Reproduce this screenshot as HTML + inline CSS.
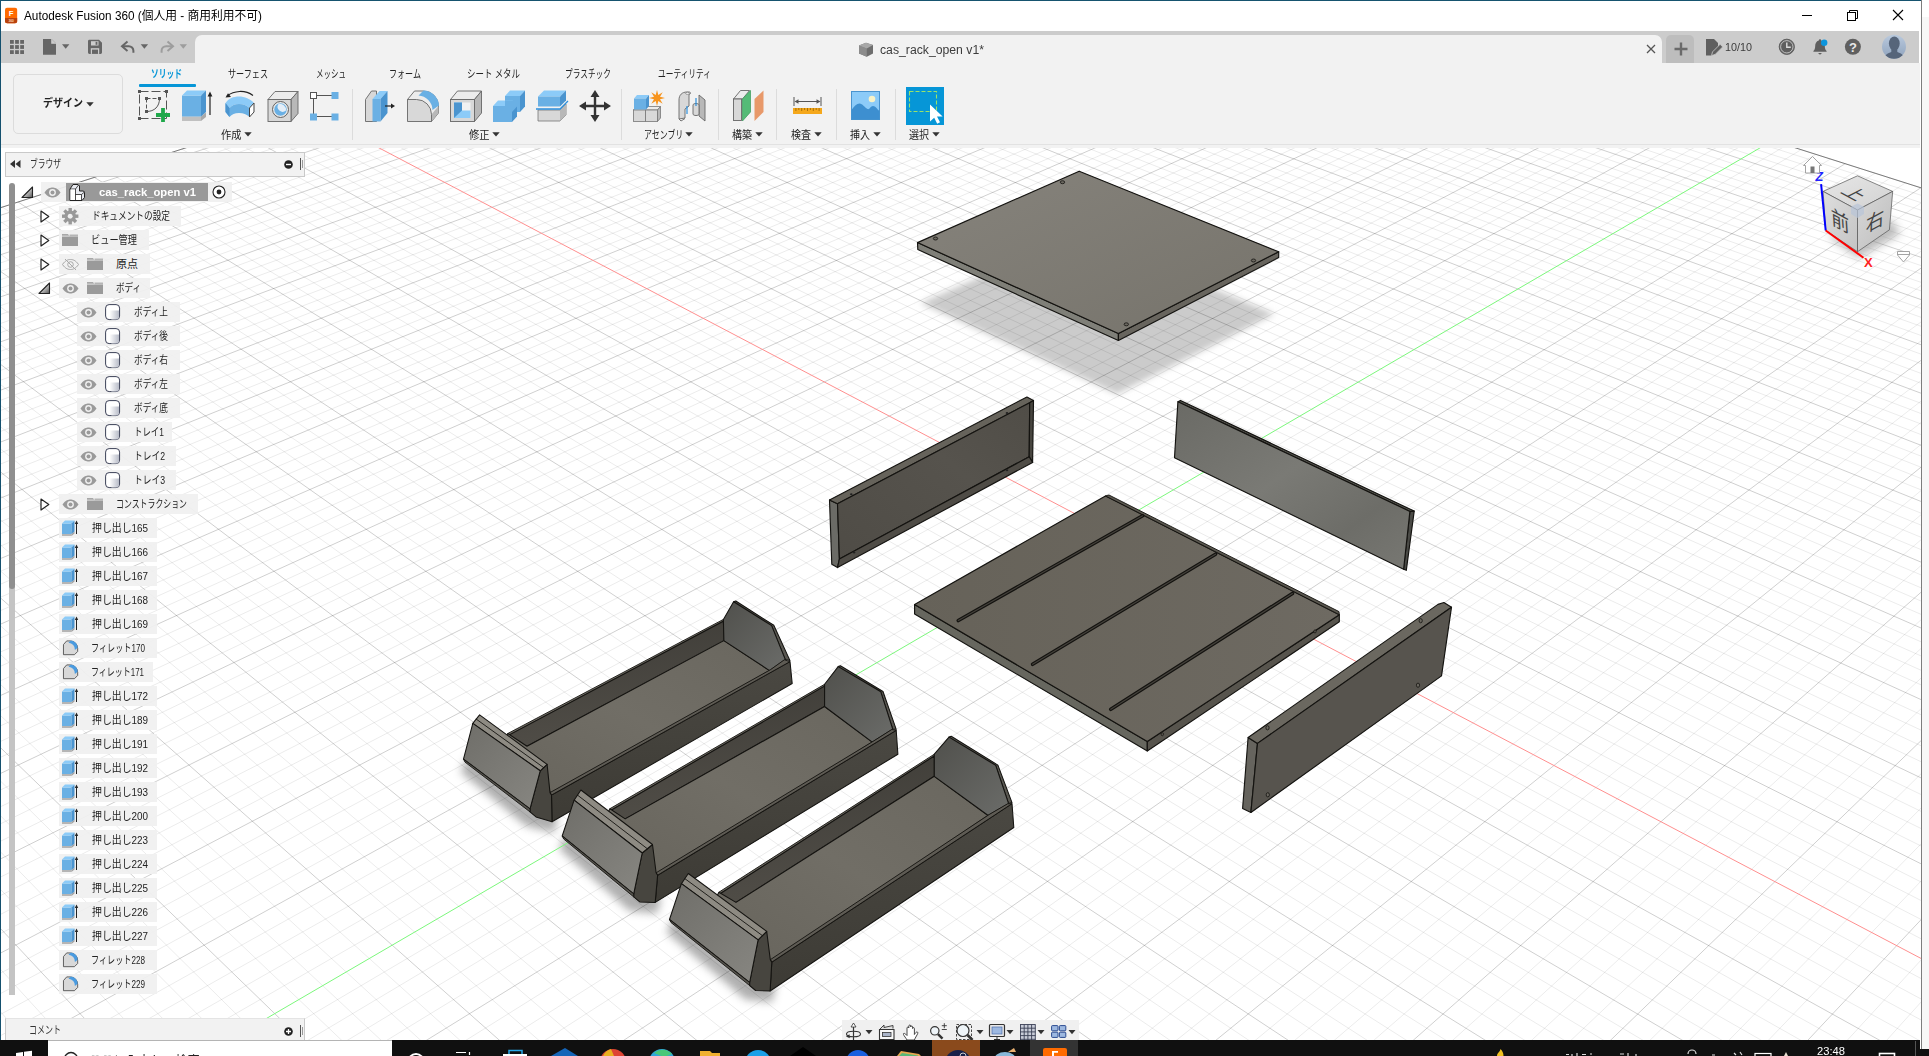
<!DOCTYPE html><html lang="ja"><head><meta charset="utf-8"><title>Autodesk Fusion 360</title><style>
*{box-sizing:border-box}
html,body{margin:0;padding:0}
body{width:1929px;height:1056px;overflow:hidden;background:#f7f7f7;position:relative;font-family:"Liberation Sans","Noto Sans CJK JP",sans-serif;}
.t{position:absolute;white-space:pre;transform-origin:0 50%;display:block}
.abs{position:absolute}
svg{position:absolute;overflow:visible}
</style></head><body><div class="abs" style="left:0;top:0;width:1922px;height:1049px;background:#fff"></div><div class="abs" style="left:0;top:0;width:1922px;height:1px;background:#16536f"></div><svg style="left:4.0px;top:6.5px" width="14.2" height="17" viewBox="0 0 16 21"><rect x="0.5" y="1" width="15" height="19" rx="2.5" fill="#ff6b00"/><path d="M0.5 13.5h15v4a2.5 2.5 0 0 1-2.5 2.5h-10a2.5 2.5 0 0 1-2.5-2.5z" fill="#b8420e"/><text x="8" y="11.2" font-family="Liberation Sans,sans-serif" font-size="9.5" font-weight="bold" fill="#fff" text-anchor="middle">F</text><text x="8" y="18.2" font-family="Liberation Sans,sans-serif" font-size="4" font-weight="bold" fill="#ffd9b8" text-anchor="middle">360</text></svg><span class="t" style="left:24.0px;top:7.5px;font-size:12px;line-height:16px;color:#000;font-weight:normal;transform:scaleX(0.9805);">Autodesk Fusion 360 (個人用 - 商用利用不可)</span><svg style="left:0.0px;top:0.0px" width="1929" height="31" viewBox="0 0 1929 31"><path d="M1802 15.5h10" stroke="#000" stroke-width="1"/><path d="M1849.5 12.5v-2h8v8h-2" fill="none" stroke="#000" stroke-width="1"/><rect x="1847.5" y="12.5" width="8" height="8" fill="none" stroke="#000" stroke-width="1"/><path d="M1893 10l10 10M1903 10l-10 10" stroke="#000" stroke-width="1.1"/></svg><div class="abs" style="left:1px;top:31px;width:1918px;height:32px;background:#cccccc"></div><div class="abs" style="left:195px;top:35px;width:1467px;height:29px;background:#f2f2f2;border-radius:7px 7px 0 0"></div><svg style="left:0.0px;top:31.0px" width="200" height="32" viewBox="0 31 200 32"><rect x="10.0" y="40.0" width="3.8" height="3.8" fill="#666"/><rect x="10.0" y="45.1" width="3.8" height="3.8" fill="#666"/><rect x="10.0" y="50.2" width="3.8" height="3.8" fill="#666"/><rect x="15.1" y="40.0" width="3.8" height="3.8" fill="#666"/><rect x="15.1" y="45.1" width="3.8" height="3.8" fill="#666"/><rect x="15.1" y="50.2" width="3.8" height="3.8" fill="#666"/><rect x="20.2" y="40.0" width="3.8" height="3.8" fill="#666"/><rect x="20.2" y="45.1" width="3.8" height="3.8" fill="#666"/><rect x="20.2" y="50.2" width="3.8" height="3.8" fill="#666"/><path d="M43 39h8.5l4.5 4.5v11.3h-13z" fill="#666"/><path d="M51.5 39v4.5h4.5" fill="#ccc" stroke="#ccc" stroke-width="0.6"/><path d="M62 44.3h7.4l-3.7 4.4z" fill="#666"/><path d="M88 41.2a1.4 1.4 0 0 1 1.4-1.4h9.6l3 3v9.7a1.4 1.4 0 0 1-1.4 1.4h-11.2a1.4 1.4 0 0 1-1.4-1.4z" fill="#666"/><rect x="91" y="41.2" width="7.5" height="4.3" fill="#ccc"/><rect x="95.6" y="41.8" width="1.8" height="3" fill="#666"/><rect x="90.8" y="48.2" width="8.4" height="5.7" fill="#ccc"/><rect x="92" y="49.6" width="6" height="4.3" fill="#666"/><path d="M127.5 41.5l-5.5 4.7 5.5 4.7" fill="none" stroke="#666" stroke-width="2" stroke-linejoin="miter"/><path d="M122.6 46.2h6.2a4.6 4.6 0 0 1 4.6 4.6v2" fill="none" stroke="#666" stroke-width="2"/><path d="M140.7 44.3h7.4l-3.7 4.4z" fill="#666"/><path d="M167.5 41.5l5.5 4.7-5.5 4.7" fill="none" stroke="#9d9d9d" stroke-width="2"/><path d="M172.4 46.2h-6.2a4.6 4.6 0 0 0-4.6 4.6v2" fill="none" stroke="#9d9d9d" stroke-width="2"/><path d="M179.6 44.3h7.4l-3.7 4.4z" fill="#9d9d9d"/></svg><svg style="left:858.0px;top:42.0px" width="16" height="16" viewBox="0 0 16 16"><path d="M1 3.5l7-2.8 7 2.2v8.6l-6.2 3.3-7.8-3.3z" fill="#6e6e6e"/><path d="M1 3.5l7.8 3v8.3l-7.8-3.3z" fill="#8c8c8c"/><path d="M1 3.5l7-2.8 7 2.2-6.2 3.6z" fill="#a8a8a8"/></svg><span class="t" style="left:880.0px;top:41.8px;font-size:12px;line-height:16px;color:#3c3c3c;font-weight:normal;transform:scaleX(1.0188);">cas_rack_open v1*</span><svg style="left:1646.0px;top:44.0px" width="10" height="10" viewBox="0 0 10 10"><path d="M1 1l8 8M9 1l-8 8" stroke="#555" stroke-width="1.3"/></svg><div class="abs" style="left:1666px;top:35px;width:28px;height:28px;background:#bdbdbd;border-radius:5px 5px 0 0"></div><svg style="left:1673.5px;top:41.5px" width="14" height="14" viewBox="0 0 14 14"><path d="M7 0.5v13M0.5 7h13" stroke="#6a6a6a" stroke-width="2.4"/></svg><svg style="left:1700.0px;top:31.0px" width="229" height="32" viewBox="1700 31 229 32"><path d="M1706 39h8l4 4v4l-6 6.5v2h-6z" fill="#5f5f5f"/><path d="M1711.5 55.5l1-3.6 7.6-7.6 2.6 2.6-7.6 7.6z" fill="#5f5f5f" stroke="#ccc" stroke-width="0.8"/><circle cx="1786.8" cy="46.8" r="7.6" fill="#5f5f5f"/><circle cx="1786.8" cy="46.8" r="7.6" fill="none" stroke="#5f5f5f" stroke-width="1" /><circle cx="1786.8" cy="46.8" r="6.2" fill="none" stroke="#ccc" stroke-width="0.9"/><path d="M1786.8 42.5v4.8h4" fill="none" stroke="#ddd" stroke-width="1.4"/><path d="M1820 39.2a1.2 1.2 0 0 1 1.2 1.2c2.6.8 3.6 3 3.6 5.6 0 2.8.8 4 1.8 5v.8h-13.2v-.8c1-1 1.8-2.2 1.8-5 0-2.600 1-4.800 3.600-5.600a1.200 1.200 0 0 1 1.200-1.200z" fill="#5f5f5f"/><path d="M1818 53h4l-2 1.700z" fill="#5f5f5f"/><circle cx="1824.2" cy="42.8" r="3.2" fill="#0c95dd"/><circle cx="1852.9" cy="46.800" r="8" fill="#5f5f5f"/><text x="1852.9" y="51.6" font-family="Liberation Sans,sans-serif" font-size="13" font-weight="bold" fill="#e8e8e8" text-anchor="middle">?</text><defs><linearGradient id="av" x1="0" y1="0" x2="0" y2="1"><stop offset="0" stop-color="#b9c9dd"/><stop offset="1" stop-color="#8fa3bd"/></linearGradient><clipPath id="avc"><circle cx="1894" cy="46.800" r="12"/></clipPath></defs><circle cx="1894" cy="46.800" r="12" fill="url(#av)"/><g clip-path="url(#avc)"><ellipse cx="1894.300" cy="43.500" rx="5.400" ry="7" fill="#56657a"/><path d="M1884 60c0-5 4-7 7.300-8v-4h6v4c3.300 1 7.300 3 7.300 8z" fill="#56657a"/></g></svg><span class="t" style="left:1725.0px;top:39.5px;font-size:11px;line-height:15px;color:#3c3c3c;font-weight:normal;transform:scaleX(0.9807);">10/10</span><div class="abs" style="left:1px;top:63px;width:1919px;height:85px;background:#f2f2f2"></div><div class="abs" style="left:1px;top:144px;width:1919px;height:1px;background:#e2e2e2"></div><div class="abs" style="left:13px;top:74px;width:110px;height:60px;border:1px solid #dcdcdc;border-radius:5px;background:#f2f2f2"></div><span class="t" style="left:43.0px;top:95.5px;font-size:11px;line-height:15px;color:#222;font-weight:bold;transform:scaleX(0.9091);">デザイン</span><svg style="left:85.5px;top:101.5px" width="8" height="5" viewBox="0 0 8 5"><path d="M0.3 0.3h7.4L4 4.6z" fill="#333"/></svg><span class="t" style="left:151.0px;top:66.8px;font-size:11px;line-height:15px;color:#0696d7;font-weight:bold;transform:scaleX(0.7045);">ソリッド</span><div class="abs" style="left:139px;top:84px;width:57px;height:3px;background:#0696d7;border-radius:1px"></div><span class="t" style="left:228.0px;top:66.8px;font-size:11px;line-height:15px;color:#222;font-weight:normal;transform:scaleX(0.7361);">サーフェス</span><span class="t" style="left:316.0px;top:66.8px;font-size:11px;line-height:15px;color:#222;font-weight:normal;transform:scaleX(0.6818);">メッシュ</span><span class="t" style="left:389.0px;top:66.8px;font-size:11px;line-height:15px;color:#222;font-weight:normal;transform:scaleX(0.7327);">フォーム</span><span class="t" style="left:467.0px;top:66.8px;font-size:11px;line-height:15px;color:#222;font-weight:normal;transform:scaleX(0.7674);">シート メタル</span><span class="t" style="left:565.0px;top:66.8px;font-size:11px;line-height:15px;color:#222;font-weight:normal;transform:scaleX(0.6993);">プラスチック</span><span class="t" style="left:658.0px;top:66.8px;font-size:11px;line-height:15px;color:#222;font-weight:normal;transform:scaleX(0.7002);">ユーティリティ</span><span class="t" style="left:221.0px;top:127.5px;font-size:11px;line-height:15px;color:#222;font-weight:normal;transform:scaleX(0.9318);">作成</span><svg style="left:244.0px;top:132.0px" width="8" height="5" viewBox="0 0 8 5"><path d="M0.3 0.3h7.4L4 4.6z" fill="#333"/></svg><span class="t" style="left:469.0px;top:127.5px;font-size:11px;line-height:15px;color:#222;font-weight:normal;transform:scaleX(0.9318);">修正</span><svg style="left:492.0px;top:132.0px" width="8" height="5" viewBox="0 0 8 5"><path d="M0.3 0.3h7.4L4 4.6z" fill="#333"/></svg><span class="t" style="left:644.0px;top:127.5px;font-size:11px;line-height:15px;color:#222;font-weight:normal;transform:scaleX(0.7217);">アセンブリ</span><svg style="left:684.5px;top:132.0px" width="8" height="5" viewBox="0 0 8 5"><path d="M0.3 0.3h7.4L4 4.6z" fill="#333"/></svg><span class="t" style="left:732.0px;top:127.5px;font-size:11px;line-height:15px;color:#222;font-weight:normal;transform:scaleX(0.9091);">構築</span><svg style="left:755.0px;top:132.0px" width="8" height="5" viewBox="0 0 8 5"><path d="M0.3 0.3h7.4L4 4.6z" fill="#333"/></svg><span class="t" style="left:790.5px;top:127.5px;font-size:11px;line-height:15px;color:#222;font-weight:normal;transform:scaleX(0.9091);">検査</span><svg style="left:813.5px;top:132.0px" width="8" height="5" viewBox="0 0 8 5"><path d="M0.3 0.3h7.4L4 4.6z" fill="#333"/></svg><span class="t" style="left:850.0px;top:127.5px;font-size:11px;line-height:15px;color:#222;font-weight:normal;transform:scaleX(0.9091);">挿入</span><svg style="left:872.5px;top:132.0px" width="8" height="5" viewBox="0 0 8 5"><path d="M0.3 0.3h7.4L4 4.6z" fill="#333"/></svg><span class="t" style="left:909.0px;top:127.5px;font-size:11px;line-height:15px;color:#222;font-weight:normal;transform:scaleX(0.9091);">選択</span><svg style="left:931.5px;top:132.0px" width="8" height="5" viewBox="0 0 8 5"><path d="M0.3 0.3h7.4L4 4.6z" fill="#333"/></svg><div class="abs" style="left:351.5px;top:89px;width:1px;height:51px;background:#dcdcdc"></div><div class="abs" style="left:620.5px;top:89px;width:1px;height:51px;background:#dcdcdc"></div><div class="abs" style="left:717.5px;top:89px;width:1px;height:51px;background:#dcdcdc"></div><div class="abs" style="left:776.0px;top:89px;width:1px;height:51px;background:#dcdcdc"></div><div class="abs" style="left:835.5px;top:89px;width:1px;height:51px;background:#dcdcdc"></div><div class="abs" style="left:894.5px;top:89px;width:1px;height:51px;background:#dcdcdc"></div><svg style="left:138.0px;top:90.0px" width="32" height="32" viewBox="0 0 32 32"><rect x="1.500" y="1.500" width="27" height="27" fill="none" stroke="#555" stroke-width="1" stroke-dasharray="9 3"/><rect x="0" y="0" width="3" height="3" fill="#555"/><rect x="27" y="0" width="3" height="3" fill="#555"/><rect x="0" y="27" width="3" height="3" fill="#555"/><path d="M8.500 8.500h13M8.500 8.500v13" fill="none" stroke="#555" stroke-width="1" stroke-dasharray="4 2"/><path d="M21.500 8.500c0 8-5 13-13 13" fill="none" stroke="#555" stroke-width="1"/><rect x="7" y="7" width="3" height="3" fill="#555"/><rect x="20" y="7" width="3" height="3" fill="#555"/><rect x="7" y="20" width="3" height="3" fill="#555"/><path d="M25 18v14M18 25h14" stroke="#1fa84a" stroke-width="3.800"/></svg><svg style="left:182.0px;top:90.0px" width="32" height="32" viewBox="0 0 32 32"><path d="M0 26.500l5-4h19l-5 4z" fill="#cfcfcf"/><path d="M0 26.500h19v4.500h-19z" fill="#c0c0c0"/><path d="M19 26.500l5-4v4.500l-5 4z" fill="#a9a9a9"/><path d="M0 5.500h19v21h-19z" fill="#6ab0e4"/><path d="M0 5.500l5-5h19l-5 5z" fill="#8ccbf8"/><path d="M19 5.500l5-5v21.500l-5 4.500z" fill="#4a94cf"/><path d="M28 25v-20" stroke="#222" stroke-width="1.200"/><path d="M25.600 6.500l2.400-5 2.400 5z" fill="#222"/></svg><svg style="left:224.0px;top:90.0px" width="32" height="32" viewBox="0 0 32 32"><path d="M1.500 13c3-4.500 8-6.500 13.500-6.500s11.500 2.500 15 6.500l-4.500 5c-3-2.500-6-4-10.500-4s-7 1.500-9.500 4z" fill="#8ccbf8"/><path d="M1.500 13l4 5c2.500-2.500 5-4 9.500-4s7.500 1.500 10.500 4v9c-3-2.500-6-4-10.500-4s-7 1.500-9.500 4l-4-5z" fill="#6ab0e4"/><path d="M1.500 13l4 5v9l-4-5z" fill="#4a94cf"/><path d="M25.500 18l4.500-5v9l-4.500 5z" fill="#fff" stroke="#444" stroke-width="1"/><path d="M29 5.500c-8-6-19-5-26 0.500" fill="none" stroke="#222" stroke-width="1.100"/><path d="M1.500 7.500l5.500-0.500-3-3.800z" fill="#222"/></svg><svg style="left:267.0px;top:90.0px" width="32" height="32" viewBox="0 0 32 32"><path d="M1 9.500l7-8h23l-7 8z" fill="#ececec" stroke="#666" stroke-width="0.900"/><path d="M24 9.500l7-8v22l-7 8z" fill="#b8b8b8" stroke="#666" stroke-width="0.900"/><rect x="1" y="9.500" width="23" height="22" fill="#d8d8d8" stroke="#666" stroke-width="0.900"/><circle cx="13.500" cy="19.500" r="8" fill="#e8e8e8" stroke="#555" stroke-width="0.900"/><circle cx="13.500" cy="19.500" r="6.200" fill="#6ab0e4"/><path d="M11.500 14a5 5 0 0 0 7.500 6.500a6.200 6.200 0 0 0-7.500-6.500z" fill="#e4eef8"/></svg><svg style="left:309.5px;top:91.5px" width="29" height="29" viewBox="0 0 29 29"><path d="M3.500 3.500h21M3.500 3.500v21M3.500 24.500h21" fill="none" stroke="#555" stroke-width="1"/><rect x="0.500" y="0.500" width="6" height="6" fill="#fff" stroke="#555" stroke-width="1"/><rect x="21.5" y="0" width="7" height="7" fill="#6ab0e4"/><rect x="0" y="21.5" width="7" height="7" fill="#6ab0e4"/><rect x="21.5" y="21.5" width="7" height="7" fill="#6ab0e4"/></svg><svg style="left:364.5px;top:90.0px" width="32" height="32" viewBox="0 0 32 32"><path d="M0.500 9.500l6-8.500h5v30.500h-11z" fill="#d8d8d8" stroke="#666" stroke-width="0.900"/><path d="M7.500 9l7-8h8l-7 8z" fill="#8ccbf8"/><path d="M7.500 9h8v22.500h-8z" fill="#6ab0e4"/><path d="M15.500 9l7-8v22l-7 8.500z" fill="#4a94cf"/><path d="M20 16h7" stroke="#222" stroke-width="1.200"/><path d="M26 13.500l4 2.500-4 2.500z" fill="#222"/><rect x="19" y="13" width="2" height="6" fill="#fff" opacity="0.0"/></svg><svg style="left:406.5px;top:90.0px" width="33" height="32" viewBox="0 0 33 32"><path d="M0.500 9.500l7-8.500h9a15 15 0 0 1 15 15v7l-7 8.500z" fill="#ececec" stroke="#666" stroke-width="0.900"/><path d="M24.500 24.500l7-8.500v7l-7 8.500z" fill="#b8b8b8"/><path d="M0.500 9.500h9a15 15 0 0 1 15 15v7h-24z" fill="#d8d8d8" stroke="#666" stroke-width="0.900"/><path d="M11.500 5.500l5-5a16 16 0 0 1 15.500 15l-6.500 4.500a15 15 0 0 0-14-14.500z" fill="#6ab0e4"/></svg><svg style="left:449.5px;top:90.0px" width="32" height="32" viewBox="0 0 32 32"><path d="M0.500 9.500l7-8.500h24l-7 8.500z" fill="#ececec" stroke="#666" stroke-width="0.900"/><path d="M24.500 9.500l7-8.500v22l-7 8.500z" fill="#b8b8b8" stroke="#666" stroke-width="0.900"/><rect x="0.500" y="9.500" width="24" height="22" fill="#d8d8d8" stroke="#666" stroke-width="0.900"/><rect x="4" y="12.500" width="16.500" height="15.500" fill="#f2f2f2"/><path d="M4 12.500h8v8h8.500v7.500h-16.500z" fill="#8ccbf8"/><path d="M4 12.500h8v8l-8 7.500z" fill="#4a94cf"/></svg><svg style="left:493.0px;top:90.0px" width="32" height="32" viewBox="0 0 32 32"><path d="M12 6l5-5.500h15l-5 5.500z" fill="#8ccbf8"/><path d="M27 6l5-5.500v16l-5 5.500z" fill="#4a94cf"/><rect x="12" y="6" width="15" height="16" fill="#6ab0e4"/><path d="M0 16l5-5.500h15l-5 5.500z" fill="#8ccbf8"/><rect x="0" y="16" width="19" height="16" fill="#6ab0e4"/><path d="M19 22l5-5.500v10l-5 5.500z" fill="#4a94cf"/><path d="M12 10.500h8v5.500h-8z" fill="#6ab0e4"/></svg><svg style="left:536.0px;top:90.0px" width="32" height="32" viewBox="0 0 32 32"><path d="M2 20h22l6-6v11l-6 6h-22z" fill="#d8d8d8" stroke="#777" stroke-width="0.800"/><path d="M24 20l6-6v11l-6 6z" fill="#b8b8b8"/><path d="M2 6.500l6-6h22l-6 6z" fill="#8ccbf8"/><rect x="2" y="6.500" width="22" height="10" fill="#6ab0e4"/><path d="M24 6.500l6-6v10l-6 6z" fill="#4a94cf"/><path d="M0 19h24l8-8" fill="none" stroke="#2b8fdd" stroke-width="1.300"/></svg><svg style="left:579.0px;top:90.0px" width="32" height="32" viewBox="0 0 32 32"><path d="M16 3v26M3 16h26" stroke="#333" stroke-width="2.400"/><path d="M16 0l4.500 7h-9zM16 32l4.500-7h-9zM0 16l7-4.500v9zM32 16l-7-4.500v9z" fill="#333"/></svg><svg style="left:632.5px;top:90.0px" width="33" height="32" viewBox="0 0 33 32"><path d="M0.500 20l3-3.500h24l-3 3.500z" fill="#ececec" stroke="#777" stroke-width="0.800"/><rect x="0.500" y="20" width="12" height="11.500" fill="#d8d8d8" stroke="#777" stroke-width="0.800"/><rect x="12.500" y="20" width="12" height="11.500" fill="#d8d8d8" stroke="#777" stroke-width="0.800"/><path d="M24.500 20l3-3.500v11.500l-3 3.500z" fill="#b8b8b8" stroke="#777" stroke-width="0.800"/><path d="M1 8.500l3-3.500h12l-3 3.500z" fill="#8ccbf8"/><rect x="1" y="8.500" width="12" height="11" fill="#6ab0e4"/><path d="M13 8.500l3-3.500v11l-3 3.500z" fill="#4a94cf"/><polygon points="24.0,0.0 25.3,5.0 29.7,2.3 27.0,6.7 32.0,8.0 27.0,9.3 29.7,13.7 25.3,11.0 24.0,16.0 22.7,11.0 18.3,13.7 21.0,9.3 16.0,8.0 21.0,6.7 18.3,2.3 22.7,5.0" fill="#f7941d"/></svg><svg style="left:677.0px;top:90.0px" width="30" height="32" viewBox="0 0 30 32"><path d="M2 29v-19c0-5 3-8 8-8h2c2 0 2 2 0 2.500v11.500l-4 3v9z" fill="#d8d8d8" stroke="#666" stroke-width="0.900"/><path d="M2 29l2 2 4-2.500" fill="none" stroke="#666" stroke-width="0.900"/><ellipse cx="10.500" cy="3.300" rx="2" ry="1" fill="#fff" stroke="#666" stroke-width="0.600"/><path d="M22 5l6 5v21l-6-5z" fill="#b8b8b8" stroke="#666" stroke-width="0.900"/><path d="M16 15c0-2 6-2 6 0v9c0 2-6 2-6 0z" fill="#d8d8d8" stroke="#666" stroke-width="0.900"/><path d="M10 16v8M19 8v8" stroke="#2b8fdd" stroke-width="1.200"/></svg><svg style="left:732.5px;top:90.0px" width="32" height="32" viewBox="0 0 32 32"><path d="M0.500 9l7-8.500h9l-7 8.500z" fill="#ececec" stroke="#666" stroke-width="0.900"/><rect x="0.500" y="9" width="8" height="21.500" fill="#d8d8d8" stroke="#666" stroke-width="0.900"/><path d="M9.500 9l8-8.500v21.500l-8 9z" fill="#55bb77" stroke="#3a9a5a" stroke-width="0.700"/><path d="M21.500 9l9-8.500v21.500l-9 9z" fill="#e8996a"/></svg><svg style="left:792.5px;top:97.0px" width="29" height="18" viewBox="0 0 29 18"><rect x="0" y="11" width="29" height="6" fill="#f5a81c"/><path d="M2.9 11v3.0" stroke="#8a5a00" stroke-width="0.700"/><path d="M5.8 11v2.0" stroke="#8a5a00" stroke-width="0.700"/><path d="M8.7 11v3.0" stroke="#8a5a00" stroke-width="0.700"/><path d="M11.6 11v2.0" stroke="#8a5a00" stroke-width="0.700"/><path d="M14.5 11v3.0" stroke="#8a5a00" stroke-width="0.700"/><path d="M17.4 11v2.0" stroke="#8a5a00" stroke-width="0.700"/><path d="M20.3 11v3.0" stroke="#8a5a00" stroke-width="0.700"/><path d="M23.2 11v2.0" stroke="#8a5a00" stroke-width="0.700"/><path d="M26.1 11v3.0" stroke="#8a5a00" stroke-width="0.700"/><path d="M1 0v9M28 0v9" stroke="#555" stroke-width="1"/><path d="M3 4.500h23" stroke="#555" stroke-width="1"/><path d="M1.500 4.500l4-2.200v4.400zM27.500 4.500l-4-2.200v4.400z" fill="#555"/></svg><svg style="left:851.0px;top:91.0px" width="29" height="29" viewBox="0 0 29 29"><rect x="0.500" y="0.500" width="28" height="28" fill="#8ccbf8" stroke="#4a94cf" stroke-width="1"/><path d="M0.500 19c3-4 5-6.500 8-6.500s5 4 8 5.500c2 1 3-3 5.500-3s4 3 6.500 5v8.500h-28z" fill="#3d8fd0"/><circle cx="21" cy="8" r="3.300" fill="#f8f2c8"/></svg><svg style="left:906.0px;top:87.0px" width="38" height="38" viewBox="0 0 38 38"><rect x="0" y="0" width="38" height="38" fill="#0696d7"/><rect x="3.500" y="4.500" width="27" height="20" fill="none" stroke="#9be26a" stroke-width="1.100" stroke-dasharray="4 2"/><path d="M24 17.500v17l4.200-3.800 3 6 2.800-1.400-3-5.800h5.600z" fill="#fff"/></svg><svg width="1929" height="1056" viewBox="0 0 1929 1056" style="left:0;top:0"><defs><clipPath id="vp"><rect x="1" y="148" width="1920" height="892"/></clipPath></defs><g clip-path="url(#vp)"><rect x="1" y="148" width="1920" height="892" fill="#fff"/><defs>
<filter id="blur8" x="-30%" y="-30%" width="160%" height="160%"><feGaussianBlur stdDeviation="3.2"/></filter>
<filter id="blur5" x="-30%" y="-30%" width="160%" height="160%"><feGaussianBlur stdDeviation="4"/></filter>
<linearGradient id="gTop" x1="0" y1="0" x2="1" y2="1"><stop offset="0" stop-color="#86837c"/><stop offset="1" stop-color="#76736b"/></linearGradient>
<linearGradient id="gBase" x1="0" y1="0" x2="1" y2="0"><stop offset="0" stop-color="#666259"/><stop offset="1" stop-color="#6e6a62"/></linearGradient>
<linearGradient id="gBack" x1="0" y1="0" x2="1" y2="1"><stop offset="0" stop-color="#6a6a65"/><stop offset="0.45" stop-color="#7a7a75"/><stop offset="0.75" stop-color="#6d6d68"/><stop offset="1" stop-color="#787873"/></linearGradient>
<linearGradient id="gFront" x1="0" y1="0" x2="1" y2="1"><stop offset="0" stop-color="#6f6e69"/><stop offset="1" stop-color="#878681"/></linearGradient>
<linearGradient id="gTrayBack" x1="0" y1="0" x2="1" y2="1"><stop offset="0" stop-color="#50504c"/><stop offset="1" stop-color="#6b6c69"/></linearGradient>
<linearGradient id="gFloor" x1="0" y1="1" x2="1" y2="0"><stop offset="0" stop-color="#67645c"/><stop offset="0.5" stop-color="#716e66"/><stop offset="1" stop-color="#6a675f"/></linearGradient>
<linearGradient id="gWall" x1="0" y1="0" x2="0" y2="1"><stop offset="0" stop-color="#4a4842"/><stop offset="1" stop-color="#3d3b35"/></linearGradient>
<linearGradient id="gWallIn" x1="0" y1="0" x2="0.25" y2="1"><stop offset="0" stop-color="#3e3c37"/><stop offset="1" stop-color="#504d47"/></linearGradient>
<linearGradient id="gLeft" x1="0" y1="1" x2="1" y2="0"><stop offset="0" stop-color="#4f4c46"/><stop offset="0.6" stop-color="#56534d"/><stop offset="1" stop-color="#504d47"/></linearGradient>
</defs>
<polygon points="1080.0,233.0 920.5,303.0 1117.0,394.0 1274.5,314.0" fill="#cbcbcb" filter="url(#blur8)"/>
<polygon points="467.5,757.1 530.0,806.9 558.0,815.8 554.0,832.8 526.0,825.9 460.5,772.1" fill="#8c8c8c" opacity="0.7" filter="url(#blur5)"/>
<polygon points="566.2,834.0 633.7,891.9 661.2,896.4 657.2,913.4 629.7,910.9 559.2,849.0" fill="#8c8c8c" opacity="0.7" filter="url(#blur5)"/>
<polygon points="673.5,917.5 749.6,980.5 776.1,985.0 772.1,1002.0 745.6,999.5 666.5,932.5" fill="#8c8c8c" opacity="0.7" filter="url(#blur5)"/>
<path d="M-846.6 481.4L984.7 -110.3M-836.6 496.9L1002.1 -104.7M-831.6 504.8L1010.9 -101.9M-826.4 512.7L1019.7 -99.1M-821.3 520.8L1028.6 -96.3M-810.7 537.1L1046.5 -90.6M-805.4 545.4L1055.6 -87.7M-800.0 553.8L1064.7 -84.8M-794.5 562.3L1073.9 -81.9M-783.4 579.6L1092.5 -75.9M-777.8 588.3L1101.8 -73.0M-772.1 597.2L1111.2 -70.0M-766.3 606.2L1120.7 -66.9M-754.6 624.4L1139.9 -60.8M-748.6 633.7L1149.5 -57.8M-742.6 643.1L1159.3 -54.7M-736.5 652.6L1169.1 -51.6M-724.0 671.9L1188.9 -45.2M-717.7 681.7L1198.9 -42.1M-711.3 691.7L1208.9 -38.9M-704.8 701.7L1219.1 -35.6M-691.6 722.2L1239.5 -29.1M-684.9 732.7L1249.9 -25.8M-678.1 743.2L1260.3 -22.5M-671.2 753.9L1270.8 -19.2M-657.2 775.7L1292.0 -12.4M-650.1 786.8L1302.7 -9.0M-642.8 798.1L1313.4 -5.6M-635.5 809.4L1324.3 -2.1M-620.6 832.6L1346.2 4.8M-613.0 844.5L1357.3 8.4M-605.3 856.4L1368.4 11.9M-597.5 868.6L1379.7 15.5M-581.5 893.3L1402.4 22.7M-573.4 906.0L1413.9 26.4M-565.2 918.8L1425.4 30.1M-556.8 931.7L1437.1 33.8M-539.8 958.2L1460.6 41.3M-531.1 971.7L1472.5 45.1M-522.3 985.4L1484.5 48.9M-513.3 999.3L1496.6 52.7M-495.1 1027.7L1521.0 60.5M-485.8 1042.2L1533.4 64.5M-476.3 1056.9L1545.8 68.4M-466.7 1071.8L1558.4 72.4M-447.1 1102.3L1583.7 80.5M-437.1 1117.9L1596.5 84.6M-426.9 1133.7L1609.5 88.7M-416.5 1149.7L1622.5 92.8M-395.4 1182.6L1648.8 101.2M-384.6 1199.4L1662.1 105.4M-373.6 1216.4L1675.6 109.7M-362.5 1233.8L1689.1 114.0M-339.6 1269.3L1716.5 122.7M-327.9 1287.4L1730.3 127.2M-316.0 1305.9L1744.3 131.6M-304.0 1324.7L1758.3 136.1M-279.2 1363.2L1786.8 145.1M-266.5 1382.9L1801.2 149.7M-253.6 1402.9L1815.8 154.4M-240.5 1423.3L1830.4 159.0M-213.6 1465.2L1860.1 168.5M-199.8 1486.6L1875.1 173.2M-185.7 1508.5L1890.2 178.1M-171.4 1530.7L1905.5 182.9M-142.0 1576.4L1936.4 192.8M-126.9 1599.8L1952.0 197.7M-111.5 1623.7L1967.8 202.8M-95.9 1648.1L1983.7 207.8M-63.7 1698.1L2015.9 218.1M-47.1 1723.9L2032.2 223.3M-30.2 1750.1L2048.7 228.5M-13.0 1776.9L2065.3 233.8M22.5 1832.0L2098.9 244.5M40.7 1860.3L2115.9 249.9M59.4 1889.3L2133.1 255.4M78.4 1918.8L2150.5 260.9M117.6 1979.8L2185.6 272.1M137.8 2011.2L2203.4 277.8M158.5 2043.4L2221.4 283.5M179.6 2076.2L2239.5 289.3M223.2 2143.9L2276.2 301.0M245.8 2179.0L2294.9 306.9M268.8 2214.8L2313.7 312.9M292.4 2251.4L2332.6 318.9M341.2 2327.2L2371.1 331.2M366.4 2366.5L2390.6 337.4M392.3 2406.7L2410.3 343.7M418.8 2447.9L2430.2 350.0M473.8 2533.3L2470.5 362.8M502.3 2577.6L2490.9 369.3M531.5 2623.0L2511.6 375.9M561.5 2669.6L2532.4 382.6M623.9 2766.6L2574.7 396.0M656.3 2817.0L2596.2 402.9M689.6 2868.7L2617.9 409.8M723.9 2921.9L2639.8 416.7M795.2 3032.9L2684.2 430.9M832.5 3090.7L2706.7 438.1M870.8 3150.2L2729.5 445.3M910.2 3211.5L2752.5 452.6M992.7 3339.7L2799.3 467.5M1035.8 3406.8L2823.0 475.1M1080.4 3475.9L2847.0 482.7M1126.3 3547.3L2871.2 490.4M-823.0 473.8L1214.3 3547.3M-799.7 466.3L1253.7 3476.0M-776.6 458.8L1291.8 3406.8M-753.7 451.4L1328.8 3339.7M-708.7 436.8L1399.5 3211.6M-686.5 429.7L1433.3 3150.3M-664.5 422.6L1466.1 3090.8M-642.8 415.6L1498.0 3033.0M-599.9 401.7L1559.1 2922.1M-578.8 394.9L1588.5 2868.9M-557.9 388.1L1617.0 2817.1M-537.2 381.5L1644.8 2766.7M-496.4 368.3L1698.2 2669.8M-476.3 361.8L1723.9 2623.2M-456.4 355.3L1749.0 2577.8M-436.6 349.0L1773.4 2533.5M-397.7 336.4L1820.5 2448.1M-378.5 330.2L1843.2 2407.0M-359.5 324.0L1865.3 2366.8M-340.7 318.0L1887.0 2327.6M-303.6 306.0L1928.8 2251.8M-285.3 300.0L1948.9 2215.1M-267.1 294.2L1968.7 2179.3M-249.1 288.4L1988.0 2144.3M-213.6 276.9L2025.4 2076.6M-196.1 271.2L2043.4 2043.8M-178.8 265.6L2061.1 2011.7M-161.6 260.1L2078.5 1980.2M-127.6 249.1L2112.1 1919.3M-110.9 243.7L2128.3 1889.8M-94.2 238.3L2144.3 1860.8M-77.8 233.0L2160.0 1832.5M-45.3 222.5L2190.3 1777.4M-29.2 217.3L2205.1 1750.7M-13.3 212.2L2219.5 1724.4M2.5 207.1L2233.7 1698.7M33.6 197.0L2261.3 1648.7M49.0 192.0L2274.7 1624.3M64.2 187.1L2287.9 1600.5M79.4 182.2L2300.8 1577.0M109.2 172.6L2326.0 1531.4M124.0 167.8L2338.2 1509.1M138.6 163.1L2350.3 1487.3M153.2 158.4L2362.1 1465.9M181.8 149.1L2385.2 1424.0M196.0 144.5L2396.4 1403.7M210.1 140.0L2407.5 1383.6M224.0 135.5L2418.3 1363.9M251.6 126.6L2439.5 1325.5M265.2 122.2L2449.9 1306.7M278.7 117.8L2460.1 1288.2M292.1 113.5L2470.1 1270.1M318.6 104.9L2489.6 1234.6M331.7 100.7L2499.2 1217.3M344.7 96.5L2508.6 1200.2M357.6 92.3L2517.8 1183.4M383.1 84.1L2536.0 1150.6M395.7 80.0L2544.8 1134.6M408.2 76.0L2553.5 1118.8M420.6 72.0L2562.1 1103.2M445.2 64.0L2578.9 1072.7M457.3 60.1L2587.1 1057.8M469.4 56.2L2595.2 1043.1M481.4 52.3L2603.2 1028.6M505.0 44.7L2618.8 1000.3M516.7 40.9L2626.5 986.4M528.3 37.2L2634.1 972.7M539.9 33.4L2641.5 959.2M562.7 26.1L2656.1 932.7M574.0 22.4L2663.2 919.8M585.2 18.8L2670.3 907.0M596.3 15.2L2677.2 894.4M618.3 8.1L2690.9 869.6M629.2 4.6L2697.6 857.5M640.0 1.1L2704.2 845.5M650.8 -2.4L2710.7 833.7M672.0 -9.3L2723.5 810.5M682.6 -12.7L2729.7 799.2M693.0 -16.0L2735.9 787.9M703.4 -19.4L2742.1 776.8M723.9 -26.0L2754.1 755.1M734.1 -29.3L2760.0 744.4M744.2 -32.6L2765.8 733.8M754.2 -35.8L2771.5 723.4M774.1 -42.2L2782.8 702.9M783.9 -45.4L2788.4 692.8M793.7 -48.6L2793.8 682.9M803.4 -51.7L2799.3 673.1M822.6 -57.9L2809.9 653.8M832.1 -61.0L2815.1 644.3M841.5 -64.0L2820.3 634.9M850.9 -67.1L2825.4 625.6M869.5 -73.1L2835.5 607.4M878.7 -76.0L2840.4 598.4M887.8 -79.0L2845.3 589.6M896.9 -81.9L2850.1 580.8M914.9 -87.7L2859.7 563.6M923.8 -90.6L2864.3 555.1M932.7 -93.5L2869.0 546.7M941.5 -96.3L2873.5 538.4M958.9 -102.0L2882.5 522.1M967.6 -104.7L2887.0 514.0M976.1 -107.5L2891.3 506.1M984.7 -110.3L2895.7 498.2" stroke="#000" stroke-opacity="0.08" stroke-width="1" fill="none"/>
<path d="M-841.6 489.1L993.3 -107.5M-816.0 528.9L1037.5 -93.4M-789.0 570.9L1083.2 -78.9M-760.5 615.2L1130.3 -63.9M-730.3 662.2L1178.9 -48.4M-698.3 711.9L1229.3 -32.4M-664.3 764.8L1281.3 -15.8M-628.1 821.0L1335.2 1.3M-589.5 880.9L1391.0 19.1M-548.4 944.9L1448.8 37.5M-504.3 1013.4L1508.8 56.6M-457.0 1086.9L1571.0 76.4M-406.1 1166.0L1635.6 97.0M-351.1 1251.4L1702.7 118.4M-227.1 1444.1L1845.2 163.7M-156.8 1553.3L1920.8 187.8M-79.9 1672.9L1999.7 212.9M4.6 1804.1L2082.0 239.1M97.8 1949.0L2167.9 266.5M201.2 2109.7L2257.8 295.1M316.5 2288.9L2351.8 325.0M445.9 2490.1L2450.2 356.4M592.3 2717.5L2553.5 389.3M759.0 2976.6L2661.9 423.8M950.8 3274.7L2775.8 460.0M1173.7 3621.0L2895.7 498.2M-846.6 481.4L1173.7 3621.0M-731.1 444.1L1364.7 3274.7M-621.2 408.6L1529.0 2976.7M-516.7 374.8L1671.8 2717.7M-417.1 342.6L1797.2 2490.3M-322.1 311.9L1908.1 2289.2M-231.3 282.6L2006.9 2110.1M-144.5 254.6L2095.4 1949.5M-61.5 227.7L2175.3 1804.7M18.1 202.0L2247.6 1673.5M94.4 177.4L2313.5 1554.0M167.6 153.7L2373.7 1444.8M237.8 131.0L2429.0 1344.5M370.4 88.2L2527.0 1166.9M433.0 68.0L2570.6 1087.8M493.2 48.5L2611.1 1014.3M551.3 29.7L2648.8 945.9M607.4 11.6L2684.1 881.9M661.5 -5.8L2717.1 822.1M713.7 -22.7L2748.1 765.9M764.2 -39.0L2777.2 713.1M813.0 -54.8L2804.6 663.4M860.2 -70.1L2830.5 616.5M906.0 -84.8L2854.9 572.1M950.2 -99.1L2878.1 530.2" stroke="#000" stroke-opacity="0.19" stroke-width="1" fill="none"/>
<path d="M-846.6 481.4L984.7 -110.3L2895.7 498.2" stroke="#7a7a7a" stroke-width="1" fill="none"/>
<path d="M305.4 109.2L2479.9 1252.2" stroke="#ff8f8f" stroke-width="1" fill="none"/>
<path d="M-291.7 1343.8L1772.5 140.6" stroke="#7cf77c" stroke-width="1" fill="none"/>
<polygon points="917.5,242.6 1118.4,333.4 1118.4,340.4 917.8,249.6" fill="#7f7f78" stroke="#141310" stroke-width="1.15" stroke-linejoin="round" />
<polygon points="1118.4,333.4 1278.7,251.8 1278.7,257.6 1118.4,340.4" fill="#68655e" stroke="#141310" stroke-width="1.15" stroke-linejoin="round" />
<polygon points="1079.2,171.2 1278.7,251.8 1118.4,333.4 917.5,242.6" fill="url(#gTop)" stroke="#141310" stroke-width="1.15" stroke-linejoin="round" />
<ellipse cx="1062.5" cy="182.2" rx="2.2" ry="1.5" fill="#6a675f" stroke="#141310" stroke-width="0.8"/>
<ellipse cx="935.5" cy="238.5" rx="2.2" ry="1.5" fill="#6a675f" stroke="#141310" stroke-width="0.8"/>
<ellipse cx="1253.5" cy="260.5" rx="2.2" ry="1.5" fill="#6a675f" stroke="#141310" stroke-width="0.8"/>
<ellipse cx="1126.3" cy="324.3" rx="2.2" ry="1.5" fill="#6a675f" stroke="#141310" stroke-width="0.8"/>
<polygon points="1409.9,511.4 1414.2,511.1 1406.3,570.3 1403.6,569.2" fill="#4a4a46" stroke="#141310" stroke-width="1.15" stroke-linejoin="round" />
<polygon points="1177.9,401.8 1180.5,400.4 1414.2,511.1 1409.9,511.4" fill="#55554f" stroke="#141310" stroke-width="1.15" stroke-linejoin="round" />
<polygon points="1177.9,401.8 1409.9,511.4 1403.6,569.2 1174.5,457.7" fill="url(#gBack)" stroke="#141310" stroke-width="1.15" stroke-linejoin="round" />
<polygon points="829.5,499.9 837.5,503.7 839.4,559.0 837.5,567.6 831.8,564.3" fill="#6b6b66" stroke="#141310" stroke-width="1.15" stroke-linejoin="round" />
<polygon points="829.5,499.9 1026.9,397.0 1033.5,400.4 1029.7,402.7 837.5,503.7" fill="#66635b" stroke="#141310" stroke-width="1.15" stroke-linejoin="round" />
<polygon points="837.5,503.7 1029.7,402.7 1029.2,456.7 839.4,559.0" fill="url(#gLeft)" stroke="#141310" stroke-width="1.15" stroke-linejoin="round" />
<polygon points="1029.7,402.7 1033.5,400.4 1032.6,462.4 1029.2,456.7" fill="#47453f" stroke="#141310" stroke-width="1.15" stroke-linejoin="round" />
<polygon points="839.4,559.0 1029.2,456.7 1032.6,462.4 837.5,567.6" fill="#4f4c46" stroke="#141310" stroke-width="1.15" stroke-linejoin="round" />
<ellipse cx="851.3" cy="494.2" rx="1.3" ry="1.0" fill="#222"/>
<ellipse cx="1007.0" cy="413.1" rx="1.3" ry="1.0" fill="#222"/>
<ellipse cx="854.1" cy="552.6" rx="1.3" ry="1.0" fill="#222"/>
<ellipse cx="1007.0" cy="470.2" rx="1.3" ry="1.0" fill="#222"/>
<polygon points="914.6,604.6 1147.3,741.6 1147.3,751.0 914.6,613.9" fill="#67675f" stroke="#141310" stroke-width="1.15" stroke-linejoin="round" />
<polygon points="1147.3,741.6 1339.3,614.7 1339.3,621.8 1147.3,751.0" fill="#57544d" stroke="#141310" stroke-width="1.15" stroke-linejoin="round" />
<polygon points="1105.5,495.9 1339.3,614.7 1147.3,741.6 914.6,604.6" fill="url(#gBase)" stroke="#141310" stroke-width="1.15" stroke-linejoin="round" />
<polygon points="1105.5,495.9 1109.0,495.0 1339.0,611.6 1339.3,614.7" fill="#5a574f" stroke="#141310" stroke-width="0.9" stroke-linejoin="round" />
<ellipse cx="1315.0" cy="631.4" rx="1.2" ry="1.6" fill="#57544d" stroke="#141310" stroke-width="0.7"/>
<ellipse cx="1162.3" cy="734.2" rx="1.2" ry="1.6" fill="#57544d" stroke="#141310" stroke-width="0.7"/>
<path d="M958.3 620.5L1142.6 515.8" stroke="#141310" stroke-width="3.6" stroke-linecap="round"/>
<path d="M958.3 620.5L1142.6 515.8" stroke="#45423c" stroke-width="1.1" stroke-linecap="round"/>
<path d="M1032.6 664.3L1215.5 554.2" stroke="#141310" stroke-width="3.6" stroke-linecap="round"/>
<path d="M1032.6 664.3L1215.5 554.2" stroke="#45423c" stroke-width="1.1" stroke-linecap="round"/>
<path d="M1110.8 709.3L1292.4 593.5" stroke="#141310" stroke-width="3.6" stroke-linecap="round"/>
<path d="M1110.8 709.3L1292.4 593.5" stroke="#45423c" stroke-width="1.1" stroke-linecap="round"/>
<polygon points="1248.1,737.5 1257.5,743.4 1250.9,812.5 1242.6,808.5" fill="#66645e" stroke="#141310" stroke-width="1.15" stroke-linejoin="round" />
<polygon points="1248.1,737.5 1438.0,604.4 1443.9,602.5 1451.5,607.2 1257.5,743.4" fill="#6b6860" stroke="#141310" stroke-width="1.15" stroke-linejoin="round" />
<polygon points="1257.5,743.4 1451.5,607.2 1441.5,675.9 1250.9,812.5" fill="#57544e" stroke="#141310" stroke-width="1.15" stroke-linejoin="round" />
<ellipse cx="1267.5" cy="727.8" rx="1.6" ry="2.1" fill="#6a675f" stroke="#141310" stroke-width="0.8"/>
<ellipse cx="1420.7" cy="620.7" rx="1.6" ry="2.1" fill="#6a675f" stroke="#141310" stroke-width="0.8"/>
<ellipse cx="1418.0" cy="685.2" rx="1.6" ry="2.1" fill="#6a675f" stroke="#141310" stroke-width="0.8"/>
<ellipse cx="1267.8" cy="794.8" rx="1.6" ry="2.1" fill="#6a675f" stroke="#141310" stroke-width="0.8"/>
<polygon points="733.6,601.8 735.8,601.0 773.8,625.3 790.0,660.6 785.3,659.6 771.6,625.6" fill="#5a5852" stroke="#141310" stroke-width="1.05" stroke-linejoin="round" />
<polygon points="507.8,733.5 723.4,619.4 723.4,621.2 509.0,735.1" fill="#6a675f" stroke="#141310" stroke-width="0.9" stroke-linejoin="round" />
<polygon points="509.0,735.1 723.4,621.2 723.9,640.6 527.0,746.2 519.5,743.7" fill="url(#gWallIn)" stroke="#141310" stroke-width="1.05" stroke-linejoin="round" />
<polygon points="507.8,733.5 527.0,746.2 723.9,640.6 769.6,670.6 551.5,795.5 542.2,772.8 502.0,743.1" fill="url(#gFloor)" stroke="#141310" stroke-width="1.05" stroke-linejoin="round" />
<polygon points="733.6,601.8 771.6,625.6 785.3,659.6 769.6,670.6 723.9,640.6 723.4,619.4" fill="url(#gTrayBack)" stroke="#141310" stroke-width="1.05" stroke-linejoin="round" />
<polygon points="551.5,795.0 790.0,661.6 792.2,683.5 552.0,821.8" fill="url(#gWall)" stroke="#141310" stroke-width="1.05" stroke-linejoin="round" />
<polygon points="550.0,792.6 770.6,669.6 784.3,659.8 790.0,661.6 551.5,795.0" fill="#5e5b54" stroke="#141310" stroke-width="0.9" stroke-linejoin="round" />
<polygon points="547.1,764.4 550.0,792.6 551.5,795.0 552.0,821.8 536.0,816.9 530.0,811.9 530.0,808.9 540.2,770.8" fill="#47453f" stroke="#141310" stroke-width="1.05" stroke-linejoin="round" />
<polygon points="479.6,714.8 547.1,764.4 540.2,770.8 472.8,723.4" fill="#8e8b83" stroke="#141310" stroke-width="1.05" stroke-linejoin="round" />
<path d="M476.2 719.1L543.7 767.6" fill="none" stroke="#141310" stroke-width="0.9" stroke-linecap="round"/>
<polygon points="472.8,723.4 540.2,770.8 530.0,808.9 463.5,759.1" fill="url(#gFront)" stroke="#141310" stroke-width="1.05" stroke-linejoin="round" />
<polygon points="463.5,759.1 530.0,808.9 530.0,811.9 465.0,762.1" fill="#56544e" stroke="#141310" stroke-width="0.9" stroke-linejoin="round" />
<polygon points="838.2,666.6 840.4,665.8 883.0,691.5 896.2,729.3 892.8,729.3 880.8,691.8" fill="#5a5852" stroke="#141310" stroke-width="1.05" stroke-linejoin="round" />
<polygon points="609.9,808.7 824.6,684.3 824.6,686.1 611.1,810.3" fill="#6a675f" stroke="#141310" stroke-width="0.9" stroke-linejoin="round" />
<polygon points="611.1,810.3 824.6,686.1 824.6,706.5 625.2,818.9 619.7,817.6" fill="url(#gWallIn)" stroke="#141310" stroke-width="1.05" stroke-linejoin="round" />
<polygon points="609.9,808.7 625.2,818.9 824.6,706.5 872.3,742.2 657.6,875.7 644.2,855.0 604.1,819.9" fill="url(#gFloor)" stroke="#141310" stroke-width="1.05" stroke-linejoin="round" />
<polygon points="838.2,666.6 880.8,691.8 892.8,729.3 872.3,742.2 824.6,706.5 824.6,684.3" fill="url(#gTrayBack)" stroke="#141310" stroke-width="1.05" stroke-linejoin="round" />
<polygon points="657.6,875.2 896.2,730.3 897.9,754.2 655.2,902.4" fill="url(#gWall)" stroke="#141310" stroke-width="1.05" stroke-linejoin="round" />
<polygon points="656.1,872.8 873.3,741.2 891.8,729.5 896.2,730.3 657.6,875.2" fill="#5e5b54" stroke="#141310" stroke-width="0.9" stroke-linejoin="round" />
<polygon points="652.5,844.5 656.1,872.8 657.6,875.2 655.2,902.4 639.7,901.9 633.7,896.9 633.7,893.9 642.2,853.0" fill="#47453f" stroke="#141310" stroke-width="1.05" stroke-linejoin="round" />
<polygon points="580.9,790.0 652.5,844.5 642.2,853.0 574.1,800.2" fill="#8e8b83" stroke="#141310" stroke-width="1.05" stroke-linejoin="round" />
<path d="M577.5 795.1L647.4 848.8" fill="none" stroke="#141310" stroke-width="0.9" stroke-linecap="round"/>
<polygon points="574.1,800.2 642.2,853.0 633.7,893.9 562.2,836.0" fill="url(#gFront)" stroke="#141310" stroke-width="1.05" stroke-linejoin="round" />
<polygon points="562.2,836.0 633.7,893.9 633.7,896.9 563.7,839.0" fill="#56544e" stroke="#141310" stroke-width="0.9" stroke-linejoin="round" />
<polygon points="949.0,737.1 951.2,736.3 997.9,765.1 1012.0,802.6 1008.6,803.6 995.7,765.4" fill="#5a5852" stroke="#141310" stroke-width="1.05" stroke-linejoin="round" />
<polygon points="718.9,892.2 934.3,754.2 934.3,756.0 720.1,893.8" fill="#6a675f" stroke="#141310" stroke-width="0.9" stroke-linejoin="round" />
<polygon points="720.1,893.8 934.3,756.0 934.3,776.3 736.0,902.4 729.5,901.1" fill="url(#gWallIn)" stroke="#141310" stroke-width="1.05" stroke-linejoin="round" />
<polygon points="718.9,892.2 736.0,902.4 934.3,776.3 988.2,815.5 771.8,962.6 760.1,941.9 713.0,903.4" fill="url(#gFloor)" stroke="#141310" stroke-width="1.05" stroke-linejoin="round" />
<polygon points="949.0,737.1 995.7,765.4 1008.6,803.6 988.2,815.5 934.3,776.3 934.3,754.2" fill="url(#gTrayBack)" stroke="#141310" stroke-width="1.05" stroke-linejoin="round" />
<polygon points="771.8,962.1 1012.0,803.6 1013.8,827.5 770.1,991.0" fill="url(#gWall)" stroke="#141310" stroke-width="1.05" stroke-linejoin="round" />
<polygon points="770.3,959.7 989.2,814.5 1007.6,803.8 1012.0,803.6 771.8,962.1" fill="#5e5b54" stroke="#141310" stroke-width="0.9" stroke-linejoin="round" />
<polygon points="766.7,931.4 770.3,959.7 771.8,962.1 770.1,991.0 755.6,990.5 749.6,985.5 749.6,982.5 758.1,939.9" fill="#47453f" stroke="#141310" stroke-width="1.05" stroke-linejoin="round" />
<polygon points="688.3,873.5 766.7,931.4 758.1,939.9 681.4,883.7" fill="#8e8b83" stroke="#141310" stroke-width="1.05" stroke-linejoin="round" />
<path d="M684.8 878.6L762.4 935.6" fill="none" stroke="#141310" stroke-width="0.9" stroke-linecap="round"/>
<polygon points="681.4,883.7 758.1,939.9 749.6,982.5 669.5,919.5" fill="url(#gFront)" stroke="#141310" stroke-width="1.05" stroke-linejoin="round" />
<polygon points="669.5,919.5 749.6,982.5 749.6,985.5 671.0,922.5" fill="#56544e" stroke="#141310" stroke-width="0.9" stroke-linejoin="round" />
<defs><linearGradient id="vcT" x1="0" y1="0" x2="1" y2="1"><stop offset="0" stop-color="#e6e6e6"/><stop offset="1" stop-color="#d2d2d2"/></linearGradient><linearGradient id="vcF" x1="0" y1="0" x2="1" y2="1"><stop offset="0" stop-color="#dedede"/><stop offset="1" stop-color="#c4c4c4"/></linearGradient><linearGradient id="vcR" x1="0" y1="0" x2="1" y2="1"><stop offset="0" stop-color="#d8d8d8"/><stop offset="1" stop-color="#bdbdbd"/></linearGradient><filter id="vcb" x="-30%" y="-30%" width="160%" height="160%"><feGaussianBlur stdDeviation="4"/></filter></defs><polygon points="1828,236 1858,258 1900,234 1892,220" fill="#909090" opacity="0.6" filter="url(#vcb)"/><polygon points="1823.1,191.4 1857.5,175.8 1892.7,191.4 1857.5,210.0" fill="url(#vcT)" stroke="#555" stroke-width="0.700"/><polygon points="1823.1,191.4 1857.5,210.0 1857.5,251.7 1825.7,230.5" fill="url(#vcF)" stroke="#555" stroke-width="0.700"/><polygon points="1857.5,210.0 1892.7,191.4 1889.4,229.8 1857.5,251.7" fill="url(#vcR)" stroke="#555" stroke-width="0.700"/><polygon points="1857.5,203.5 1864,206.800 1864,214 1857.5,218 1851,214 1851,206.800" fill="#b8c4d8" opacity="0.700"/><text font-family="Noto Sans CJK JP,sans-serif" fill="#444" font-size="17" transform="matrix(1.0,0.54,-1.0,0.52,1848.2,196.9)" text-anchor="middle">上</text><text font-family="Noto Sans CJK JP,sans-serif" fill="#444" font-size="17" transform="matrix(1.08,0.58,0.08,1.24,1840.6,228.8)" text-anchor="middle">前</text><text font-family="Noto Sans CJK JP,sans-serif" fill="#444" font-size="17" transform="matrix(1.08,-0.57,-0.05,1.2,1874.7,228.4)" text-anchor="middle">右</text><path d="M1821.100 184.100L1825.700 230.500" stroke="#0000ff" stroke-width="2"/><path d="M1825.700 230.500L1863.500 257.700" stroke="#ff0000" stroke-width="2"/><text x="1815.500" y="181.500" font-family="Liberation Sans,sans-serif" font-size="13" font-weight="bold" fill="#2222ff" transform="skewX(-8)" style="transform-origin:1819px 176px">Z</text><text x="1864" y="266.500" font-family="Liberation Sans,sans-serif" font-size="13" font-weight="bold" fill="#ff2222">X</text><path d="M1803.500 165.500l9-9 9 9h-2v7.500h-14v-7.500z" fill="#fff" stroke="#9a9a9a" stroke-width="0.900"/><rect x="1810.500" y="166.500" width="4" height="6.500" fill="#777"/><path d="M1897.500 251.500h12v3.500l-6 7-6-7z" fill="#fff" stroke="#9a9a9a" stroke-width="0.900"/><path d="M1897.500 254.500h12" stroke="#9a9a9a" stroke-width="0.900"/></g></svg><div class="abs" style="left:5px;top:152px;width:300px;height:25px;background:#f2f2f2;border:1px solid #c9c9c9"></div><svg style="left:10.0px;top:159.5px" width="11" height="8" viewBox="0 0 11 8"><path d="M5 0v8l-5-4zM10.500 0v8l-5-4z" fill="#333"/></svg><span class="t" style="left:30.0px;top:157.3px;font-size:11px;line-height:15px;color:#333;font-weight:normal;transform:scaleX(0.7045);">ブラウザ</span><svg style="left:283.5px;top:159.5px" width="9" height="9" viewBox="0 0 9 9"><circle cx="4.500" cy="4.500" r="4.300" fill="#222"/><path d="M2 4.500h5" stroke="#fff" stroke-width="1.400"/></svg><svg style="left:299.5px;top:158.0px" width="4" height="12" viewBox="0 0 4 12"><path d="M0.500 0v12" stroke="#555" stroke-width="1"/><path d="M2.500 2v8" stroke="#999" stroke-width="1"/></svg><div class="abs" style="left:9px;top:190px;width:6px;height:805px;background:#c4c4c4"></div><div class="abs" style="left:9px;top:183px;width:6px;height:406px;background:#8f8f8f;border-radius:3px"></div><svg style="left:21.0px;top:186.0px" width="13" height="13" viewBox="0 0 13 13"><defs><linearGradient id="tg" x1="0" y1="0" x2="1" y2="1"><stop offset="0.300" stop-color="#eee"/><stop offset="1" stop-color="#555"/></linearGradient></defs><path d="M11.500 1v10.500h-10.500z" fill="url(#tg)" stroke="#222" stroke-width="1.100" stroke-linejoin="round"/></svg><div class="abs" style="left:41.0px;top:182.0px;width:191.0px;height:20px;background:rgba(240,240,240,0.92)"></div><svg style="left:43.5px;top:186.5px" width="17" height="11" viewBox="0 0 17 11"><path d="M0.500 5.500c3-4.500 6-5 8-5s5 0.500 8 5c-3 4.500-6 5-8 5s-5-0.500-8-5z" fill="#9a9a9a"/><circle cx="8.500" cy="5.500" r="3.400" fill="#f0f0f0"/><circle cx="8.500" cy="5.500" r="2" fill="#9a9a9a"/></svg><div class="abs" style="left:66px;top:183px;width:142px;height:18px;background:#999"></div><svg style="left:68.5px;top:182.5px" width="17" height="19" viewBox="0 0 17 19"><path d="M1 6l3-4.500h5l1.500 1.500v5l4 0 1 1.500v5l-2.500 3h-12z" fill="#e8eaf0" stroke="#222" stroke-width="1"/><path d="M1 6h5.500v11.500M6.500 6l3-4M6.500 11.500h6l3-2.500M12.500 11.500v6" fill="none" stroke="#222" stroke-width="0.800"/><path d="M1.500 6.500h4.500v10.500h-4.500z" fill="#fff"/><path d="M7 12h5v5h-5z" fill="#fff"/></svg><span class="t" style="left:99.0px;top:184.8px;font-size:11.5px;line-height:15px;color:#fff;font-weight:bold;transform:scaleX(0.9787);">cas_rack_open v1</span><svg style="left:212.0px;top:185.0px" width="14" height="14" viewBox="0 0 14 14"><circle cx="7" cy="7" r="6" fill="#fff" stroke="#222" stroke-width="1.100"/><circle cx="7" cy="7" r="2.400" fill="#222"/></svg><svg style="left:40.2px;top:209.5px" width="10.5" height="13" viewBox="0 0 10.5 13"><path d="M1 1l7.800 5.500-7.800 5.500z" fill="#fff" stroke="#222" stroke-width="1.200" stroke-linejoin="round"/></svg><div class="abs" style="left:59.0px;top:206.0px;width:122.0px;height:20px;background:rgba(240,240,240,0.92)"></div><svg style="left:61.8px;top:207.8px" width="16.4" height="16.4" viewBox="0 0 16.4 16.4"><rect x="6.500" y="0" width="3.400" height="4" fill="#999" transform="rotate(0 8.200 8.200)"/><rect x="6.500" y="0" width="3.400" height="4" fill="#999" transform="rotate(45 8.200 8.200)"/><rect x="6.500" y="0" width="3.400" height="4" fill="#999" transform="rotate(90 8.200 8.200)"/><rect x="6.500" y="0" width="3.400" height="4" fill="#999" transform="rotate(135 8.200 8.200)"/><rect x="6.500" y="0" width="3.400" height="4" fill="#999" transform="rotate(180 8.200 8.200)"/><rect x="6.500" y="0" width="3.400" height="4" fill="#999" transform="rotate(225 8.200 8.200)"/><rect x="6.500" y="0" width="3.400" height="4" fill="#999" transform="rotate(270 8.200 8.200)"/><rect x="6.500" y="0" width="3.400" height="4" fill="#999" transform="rotate(315 8.200 8.200)"/><circle cx="8.200" cy="8.200" r="5.800" fill="#999"/><circle cx="8.200" cy="8.200" r="2.500" fill="#f0f0f0"/></svg><span class="t" style="left:92.0px;top:208.5px;font-size:11px;line-height:15px;color:#222;font-weight:normal;transform:scaleX(0.7879);">ドキュメントの設定</span><svg style="left:40.2px;top:233.5px" width="10.5" height="13" viewBox="0 0 10.5 13"><path d="M1 1l7.800 5.500-7.800 5.500z" fill="#fff" stroke="#222" stroke-width="1.200" stroke-linejoin="round"/></svg><div class="abs" style="left:59.0px;top:230.0px;width:90.0px;height:20px;background:rgba(240,240,240,0.92)"></div><svg style="left:62.0px;top:233.0px" width="16" height="13" viewBox="0 0 16 13"><path d="M0 1h6l1.200 1.800h-7.200z" fill="#a8a8a8"/><path d="M0 3.500h16v9.500h-16z" fill="#9a9a9a"/><path d="M7.500 1.500h8.500v2h-8.500z" fill="#b5b5b5"/></svg><span class="t" style="left:91.0px;top:232.5px;font-size:11px;line-height:15px;color:#222;font-weight:normal;transform:scaleX(0.8364);">ビュー管理</span><svg style="left:40.2px;top:257.5px" width="10.5" height="13" viewBox="0 0 10.5 13"><path d="M1 1l7.800 5.500-7.800 5.500z" fill="#fff" stroke="#222" stroke-width="1.200" stroke-linejoin="round"/></svg><div class="abs" style="left:59.0px;top:254.0px;width:91.0px;height:20px;background:rgba(240,240,240,0.92)"></div><svg style="left:61.5px;top:258.5px" width="17" height="11" viewBox="0 0 17 11"><path d="M0.500 5.500c3-4.500 6-5 8-5s5 0.500 8 5c-3 4.500-6 5-8 5s-5-0.500-8-5z" fill="none" stroke="#a8a8a8" stroke-width="1"/><circle cx="8.500" cy="5.500" r="2.800" fill="none" stroke="#a8a8a8" stroke-width="1"/><path d="M3 0l11 11" stroke="#a8a8a8" stroke-width="1"/></svg><svg style="left:87.0px;top:257.0px" width="16" height="13" viewBox="0 0 16 13"><path d="M0 1h6l1.200 1.800h-7.200z" fill="#a8a8a8"/><path d="M0 3.500h16v9.500h-16z" fill="#9a9a9a"/><path d="M7.500 1.500h8.500v2h-8.500z" fill="#b5b5b5"/></svg><span class="t" style="left:116.0px;top:256.5px;font-size:11px;line-height:15px;color:#222;font-weight:normal;transform:scaleX(1.0000);">原点</span><svg style="left:38.0px;top:282.0px" width="13" height="13" viewBox="0 0 13 13"><defs><linearGradient id="tg" x1="0" y1="0" x2="1" y2="1"><stop offset="0.300" stop-color="#eee"/><stop offset="1" stop-color="#555"/></linearGradient></defs><path d="M11.500 1v10.500h-10.500z" fill="url(#tg)" stroke="#222" stroke-width="1.100" stroke-linejoin="round"/></svg><div class="abs" style="left:59.0px;top:278.0px;width:91.0px;height:20px;background:rgba(240,240,240,0.92)"></div><svg style="left:61.5px;top:282.5px" width="17" height="11" viewBox="0 0 17 11"><path d="M0.500 5.500c3-4.500 6-5 8-5s5 0.500 8 5c-3 4.500-6 5-8 5s-5-0.500-8-5z" fill="#9a9a9a"/><circle cx="8.500" cy="5.500" r="3.400" fill="#f0f0f0"/><circle cx="8.500" cy="5.500" r="2" fill="#9a9a9a"/></svg><svg style="left:87.0px;top:281.0px" width="16" height="13" viewBox="0 0 16 13"><path d="M0 1h6l1.200 1.800h-7.200z" fill="#a8a8a8"/><path d="M0 3.500h16v9.500h-16z" fill="#9a9a9a"/><path d="M7.500 1.500h8.500v2h-8.500z" fill="#b5b5b5"/></svg><span class="t" style="left:116.0px;top:280.5px;font-size:11px;line-height:15px;color:#222;font-weight:normal;transform:scaleX(0.7756);">ボディ</span><div class="abs" style="left:77.0px;top:302.0px;width:103.0px;height:20px;background:rgba(240,240,240,0.92)"></div><svg style="left:79.5px;top:306.5px" width="17" height="11" viewBox="0 0 17 11"><path d="M0.500 5.500c3-4.500 6-5 8-5s5 0.500 8 5c-3 4.500-6 5-8 5s-5-0.500-8-5z" fill="#9a9a9a"/><circle cx="8.500" cy="5.500" r="3.400" fill="#f0f0f0"/><circle cx="8.500" cy="5.500" r="2" fill="#9a9a9a"/></svg><svg style="left:105.4px;top:303.9px" width="15.2" height="16.2" viewBox="0 0 15.2 16.2"><defs><linearGradient id="bg" x1="0" y1="0" x2="1" y2="0"><stop offset="0" stop-color="#fff"/><stop offset="1" stop-color="#b8bcc8"/></linearGradient></defs><rect x="0.600" y="0.600" width="14" height="15" rx="3.500" fill="#fff" stroke="#3a3f55" stroke-width="1"/><path d="M4.500 6.500h9.500v6a3 3 0 0 1-3 3h-3.500a3 3 0 0 1-3-3z" fill="url(#bg)"/></svg><span class="t" style="left:134.0px;top:304.5px;font-size:11px;line-height:15px;color:#222;font-weight:normal;transform:scaleX(0.7864);">ボディ上</span><div class="abs" style="left:77.0px;top:326.0px;width:103.0px;height:20px;background:rgba(240,240,240,0.92)"></div><svg style="left:79.5px;top:330.5px" width="17" height="11" viewBox="0 0 17 11"><path d="M0.500 5.500c3-4.500 6-5 8-5s5 0.500 8 5c-3 4.500-6 5-8 5s-5-0.500-8-5z" fill="#9a9a9a"/><circle cx="8.500" cy="5.500" r="3.400" fill="#f0f0f0"/><circle cx="8.500" cy="5.500" r="2" fill="#9a9a9a"/></svg><svg style="left:105.4px;top:327.9px" width="15.2" height="16.2" viewBox="0 0 15.2 16.2"><defs><linearGradient id="bg" x1="0" y1="0" x2="1" y2="0"><stop offset="0" stop-color="#fff"/><stop offset="1" stop-color="#b8bcc8"/></linearGradient></defs><rect x="0.600" y="0.600" width="14" height="15" rx="3.500" fill="#fff" stroke="#3a3f55" stroke-width="1"/><path d="M4.500 6.500h9.500v6a3 3 0 0 1-3 3h-3.500a3 3 0 0 1-3-3z" fill="url(#bg)"/></svg><span class="t" style="left:134.0px;top:328.5px;font-size:11px;line-height:15px;color:#222;font-weight:normal;transform:scaleX(0.7864);">ボディ後</span><div class="abs" style="left:77.0px;top:350.0px;width:103.0px;height:20px;background:rgba(240,240,240,0.92)"></div><svg style="left:79.5px;top:354.5px" width="17" height="11" viewBox="0 0 17 11"><path d="M0.500 5.500c3-4.500 6-5 8-5s5 0.500 8 5c-3 4.500-6 5-8 5s-5-0.500-8-5z" fill="#9a9a9a"/><circle cx="8.500" cy="5.500" r="3.400" fill="#f0f0f0"/><circle cx="8.500" cy="5.500" r="2" fill="#9a9a9a"/></svg><svg style="left:105.4px;top:351.9px" width="15.2" height="16.2" viewBox="0 0 15.2 16.2"><defs><linearGradient id="bg" x1="0" y1="0" x2="1" y2="0"><stop offset="0" stop-color="#fff"/><stop offset="1" stop-color="#b8bcc8"/></linearGradient></defs><rect x="0.600" y="0.600" width="14" height="15" rx="3.500" fill="#fff" stroke="#3a3f55" stroke-width="1"/><path d="M4.500 6.500h9.500v6a3 3 0 0 1-3 3h-3.500a3 3 0 0 1-3-3z" fill="url(#bg)"/></svg><span class="t" style="left:134.0px;top:352.5px;font-size:11px;line-height:15px;color:#222;font-weight:normal;transform:scaleX(0.7864);">ボディ右</span><div class="abs" style="left:77.0px;top:374.0px;width:103.0px;height:20px;background:rgba(240,240,240,0.92)"></div><svg style="left:79.5px;top:378.5px" width="17" height="11" viewBox="0 0 17 11"><path d="M0.500 5.500c3-4.500 6-5 8-5s5 0.500 8 5c-3 4.500-6 5-8 5s-5-0.500-8-5z" fill="#9a9a9a"/><circle cx="8.500" cy="5.500" r="3.400" fill="#f0f0f0"/><circle cx="8.500" cy="5.500" r="2" fill="#9a9a9a"/></svg><svg style="left:105.4px;top:375.9px" width="15.2" height="16.2" viewBox="0 0 15.2 16.2"><defs><linearGradient id="bg" x1="0" y1="0" x2="1" y2="0"><stop offset="0" stop-color="#fff"/><stop offset="1" stop-color="#b8bcc8"/></linearGradient></defs><rect x="0.600" y="0.600" width="14" height="15" rx="3.500" fill="#fff" stroke="#3a3f55" stroke-width="1"/><path d="M4.500 6.500h9.500v6a3 3 0 0 1-3 3h-3.500a3 3 0 0 1-3-3z" fill="url(#bg)"/></svg><span class="t" style="left:134.0px;top:376.5px;font-size:11px;line-height:15px;color:#222;font-weight:normal;transform:scaleX(0.7864);">ボディ左</span><div class="abs" style="left:77.0px;top:398.0px;width:103.0px;height:20px;background:rgba(240,240,240,0.92)"></div><svg style="left:79.5px;top:402.5px" width="17" height="11" viewBox="0 0 17 11"><path d="M0.500 5.500c3-4.500 6-5 8-5s5 0.500 8 5c-3 4.500-6 5-8 5s-5-0.500-8-5z" fill="#9a9a9a"/><circle cx="8.500" cy="5.500" r="3.400" fill="#f0f0f0"/><circle cx="8.500" cy="5.500" r="2" fill="#9a9a9a"/></svg><svg style="left:105.4px;top:399.9px" width="15.2" height="16.2" viewBox="0 0 15.2 16.2"><defs><linearGradient id="bg" x1="0" y1="0" x2="1" y2="0"><stop offset="0" stop-color="#fff"/><stop offset="1" stop-color="#b8bcc8"/></linearGradient></defs><rect x="0.600" y="0.600" width="14" height="15" rx="3.500" fill="#fff" stroke="#3a3f55" stroke-width="1"/><path d="M4.500 6.500h9.500v6a3 3 0 0 1-3 3h-3.500a3 3 0 0 1-3-3z" fill="url(#bg)"/></svg><span class="t" style="left:134.0px;top:400.5px;font-size:11px;line-height:15px;color:#222;font-weight:normal;transform:scaleX(0.7864);">ボディ底</span><div class="abs" style="left:77.0px;top:422.0px;width:95.0px;height:20px;background:rgba(240,240,240,0.92)"></div><svg style="left:79.5px;top:426.5px" width="17" height="11" viewBox="0 0 17 11"><path d="M0.500 5.500c3-4.500 6-5 8-5s5 0.500 8 5c-3 4.500-6 5-8 5s-5-0.500-8-5z" fill="#9a9a9a"/><circle cx="8.500" cy="5.500" r="3.400" fill="#f0f0f0"/><circle cx="8.500" cy="5.500" r="2" fill="#9a9a9a"/></svg><svg style="left:105.4px;top:423.9px" width="15.2" height="16.2" viewBox="0 0 15.2 16.2"><defs><linearGradient id="bg" x1="0" y1="0" x2="1" y2="0"><stop offset="0" stop-color="#fff"/><stop offset="1" stop-color="#b8bcc8"/></linearGradient></defs><rect x="0.600" y="0.600" width="14" height="15" rx="3.500" fill="#fff" stroke="#3a3f55" stroke-width="1"/><path d="M4.500 6.500h9.500v6a3 3 0 0 1-3 3h-3.500a3 3 0 0 1-3-3z" fill="url(#bg)"/></svg><span class="t" style="left:134.0px;top:424.5px;font-size:11px;line-height:15px;color:#222;font-weight:normal;transform:scaleX(0.7668);">トレイ1</span><div class="abs" style="left:77.0px;top:446.0px;width:99.0px;height:20px;background:rgba(240,240,240,0.92)"></div><svg style="left:79.5px;top:450.5px" width="17" height="11" viewBox="0 0 17 11"><path d="M0.500 5.500c3-4.500 6-5 8-5s5 0.500 8 5c-3 4.500-6 5-8 5s-5-0.500-8-5z" fill="#9a9a9a"/><circle cx="8.500" cy="5.500" r="3.400" fill="#f0f0f0"/><circle cx="8.500" cy="5.500" r="2" fill="#9a9a9a"/></svg><svg style="left:105.4px;top:447.9px" width="15.2" height="16.2" viewBox="0 0 15.2 16.2"><defs><linearGradient id="bg" x1="0" y1="0" x2="1" y2="0"><stop offset="0" stop-color="#fff"/><stop offset="1" stop-color="#b8bcc8"/></linearGradient></defs><rect x="0.600" y="0.600" width="14" height="15" rx="3.500" fill="#fff" stroke="#3a3f55" stroke-width="1"/><path d="M4.500 6.500h9.500v6a3 3 0 0 1-3 3h-3.500a3 3 0 0 1-3-3z" fill="url(#bg)"/></svg><span class="t" style="left:134.0px;top:448.5px;font-size:11px;line-height:15px;color:#222;font-weight:normal;transform:scaleX(0.7923);">トレイ2</span><div class="abs" style="left:77.0px;top:470.0px;width:99.0px;height:20px;background:rgba(240,240,240,0.92)"></div><svg style="left:79.5px;top:474.5px" width="17" height="11" viewBox="0 0 17 11"><path d="M0.500 5.500c3-4.500 6-5 8-5s5 0.500 8 5c-3 4.500-6 5-8 5s-5-0.500-8-5z" fill="#9a9a9a"/><circle cx="8.500" cy="5.500" r="3.400" fill="#f0f0f0"/><circle cx="8.500" cy="5.500" r="2" fill="#9a9a9a"/></svg><svg style="left:105.4px;top:471.9px" width="15.2" height="16.2" viewBox="0 0 15.2 16.2"><defs><linearGradient id="bg" x1="0" y1="0" x2="1" y2="0"><stop offset="0" stop-color="#fff"/><stop offset="1" stop-color="#b8bcc8"/></linearGradient></defs><rect x="0.600" y="0.600" width="14" height="15" rx="3.500" fill="#fff" stroke="#3a3f55" stroke-width="1"/><path d="M4.500 6.500h9.500v6a3 3 0 0 1-3 3h-3.500a3 3 0 0 1-3-3z" fill="url(#bg)"/></svg><span class="t" style="left:134.0px;top:472.5px;font-size:11px;line-height:15px;color:#222;font-weight:normal;transform:scaleX(0.7923);">トレイ3</span><svg style="left:40.2px;top:497.5px" width="10.5" height="13" viewBox="0 0 10.5 13"><path d="M1 1l7.800 5.500-7.800 5.500z" fill="#fff" stroke="#222" stroke-width="1.200" stroke-linejoin="round"/></svg><div class="abs" style="left:59.0px;top:494.0px;width:139.0px;height:20px;background:rgba(240,240,240,0.92)"></div><svg style="left:61.5px;top:498.5px" width="17" height="11" viewBox="0 0 17 11"><path d="M0.500 5.500c3-4.500 6-5 8-5s5 0.500 8 5c-3 4.500-6 5-8 5s-5-0.500-8-5z" fill="#9a9a9a"/><circle cx="8.500" cy="5.500" r="3.400" fill="#f0f0f0"/><circle cx="8.500" cy="5.500" r="2" fill="#9a9a9a"/></svg><svg style="left:87.0px;top:497.0px" width="16" height="13" viewBox="0 0 16 13"><path d="M0 1h6l1.200 1.800h-7.200z" fill="#a8a8a8"/><path d="M0 3.500h16v9.500h-16z" fill="#9a9a9a"/><path d="M7.500 1.500h8.500v2h-8.500z" fill="#b5b5b5"/></svg><span class="t" style="left:116.0px;top:496.5px;font-size:11px;line-height:15px;color:#222;font-weight:normal;transform:scaleX(0.7188);">コンストラクション</span><div class="abs" style="left:59.0px;top:518.0px;width:98.0px;height:20px;background:rgba(240,240,240,0.92)"></div><svg style="left:61.5px;top:519.5px" width="17" height="17" viewBox="0 0 17 17"><path d="M0 14l3-2.500h9l-3 2.500z" fill="#ccc"/><path d="M0 14h9.500v2h-9.500z" fill="#b5b5b5"/><path d="M9.500 14l3-2.500v2l-3 2.500z" fill="#a0a0a0"/><path d="M0 3.500h9.500v10.500h-9.500z" fill="#6ab0e4"/><path d="M0 3.500l3-3h9.500l-3 3z" fill="#8ccbf8"/><path d="M9.500 3.500l3-3v11l-3 2.500z" fill="#4a94cf"/><path d="M14.500 14v-11" stroke="#222" stroke-width="1"/><path d="M12.800 4l1.700-3.500 1.700 3.500z" fill="#222"/></svg><span class="t" style="left:92.0px;top:520.5px;font-size:11px;line-height:15px;color:#222;font-weight:normal;transform:scaleX(0.8980);">押し出し165</span><div class="abs" style="left:59.0px;top:542.0px;width:98.0px;height:20px;background:rgba(240,240,240,0.92)"></div><svg style="left:61.5px;top:543.5px" width="17" height="17" viewBox="0 0 17 17"><path d="M0 14l3-2.500h9l-3 2.500z" fill="#ccc"/><path d="M0 14h9.500v2h-9.500z" fill="#b5b5b5"/><path d="M9.500 14l3-2.500v2l-3 2.500z" fill="#a0a0a0"/><path d="M0 3.500h9.500v10.500h-9.500z" fill="#6ab0e4"/><path d="M0 3.500l3-3h9.500l-3 3z" fill="#8ccbf8"/><path d="M9.500 3.500l3-3v11l-3 2.500z" fill="#4a94cf"/><path d="M14.500 14v-11" stroke="#222" stroke-width="1"/><path d="M12.800 4l1.700-3.500 1.700 3.500z" fill="#222"/></svg><span class="t" style="left:92.0px;top:544.5px;font-size:11px;line-height:15px;color:#222;font-weight:normal;transform:scaleX(0.8980);">押し出し166</span><div class="abs" style="left:59.0px;top:566.0px;width:98.0px;height:20px;background:rgba(240,240,240,0.92)"></div><svg style="left:61.5px;top:567.5px" width="17" height="17" viewBox="0 0 17 17"><path d="M0 14l3-2.500h9l-3 2.500z" fill="#ccc"/><path d="M0 14h9.500v2h-9.500z" fill="#b5b5b5"/><path d="M9.500 14l3-2.500v2l-3 2.500z" fill="#a0a0a0"/><path d="M0 3.500h9.500v10.500h-9.500z" fill="#6ab0e4"/><path d="M0 3.500l3-3h9.500l-3 3z" fill="#8ccbf8"/><path d="M9.500 3.500l3-3v11l-3 2.500z" fill="#4a94cf"/><path d="M14.500 14v-11" stroke="#222" stroke-width="1"/><path d="M12.800 4l1.700-3.500 1.700 3.500z" fill="#222"/></svg><span class="t" style="left:92.0px;top:568.5px;font-size:11px;line-height:15px;color:#222;font-weight:normal;transform:scaleX(0.8980);">押し出し167</span><div class="abs" style="left:59.0px;top:590.0px;width:98.0px;height:20px;background:rgba(240,240,240,0.92)"></div><svg style="left:61.5px;top:591.5px" width="17" height="17" viewBox="0 0 17 17"><path d="M0 14l3-2.500h9l-3 2.500z" fill="#ccc"/><path d="M0 14h9.500v2h-9.500z" fill="#b5b5b5"/><path d="M9.500 14l3-2.500v2l-3 2.500z" fill="#a0a0a0"/><path d="M0 3.500h9.500v10.500h-9.500z" fill="#6ab0e4"/><path d="M0 3.500l3-3h9.500l-3 3z" fill="#8ccbf8"/><path d="M9.500 3.500l3-3v11l-3 2.500z" fill="#4a94cf"/><path d="M14.500 14v-11" stroke="#222" stroke-width="1"/><path d="M12.800 4l1.700-3.500 1.700 3.500z" fill="#222"/></svg><span class="t" style="left:92.0px;top:592.5px;font-size:11px;line-height:15px;color:#222;font-weight:normal;transform:scaleX(0.8980);">押し出し168</span><div class="abs" style="left:59.0px;top:614.0px;width:98.0px;height:20px;background:rgba(240,240,240,0.92)"></div><svg style="left:61.5px;top:615.5px" width="17" height="17" viewBox="0 0 17 17"><path d="M0 14l3-2.500h9l-3 2.500z" fill="#ccc"/><path d="M0 14h9.500v2h-9.500z" fill="#b5b5b5"/><path d="M9.500 14l3-2.500v2l-3 2.500z" fill="#a0a0a0"/><path d="M0 3.500h9.500v10.500h-9.500z" fill="#6ab0e4"/><path d="M0 3.500l3-3h9.500l-3 3z" fill="#8ccbf8"/><path d="M9.500 3.500l3-3v11l-3 2.500z" fill="#4a94cf"/><path d="M14.500 14v-11" stroke="#222" stroke-width="1"/><path d="M12.800 4l1.700-3.500 1.700 3.500z" fill="#222"/></svg><span class="t" style="left:92.0px;top:616.5px;font-size:11px;line-height:15px;color:#222;font-weight:normal;transform:scaleX(0.8980);">押し出し169</span><div class="abs" style="left:59.0px;top:638.0px;width:98.0px;height:20px;background:rgba(240,240,240,0.92)"></div><svg style="left:62.7px;top:640.4px" width="15.6" height="15.6" viewBox="0 0 17 17"><path d="M0.500 5l3.500-4h4a8 8 0 0 1 8 8v3.500l-3.500 3.500h-12z" fill="#d8d8d8" stroke="#444" stroke-width="0.900"/><path d="M6 3l2.500-2.500a8 8 0 0 1 7.500 8l-3 2.500a7.500 7.500 0 0 0-7-8z" fill="#4a9be0"/><path d="M0.500 5h4a8 8 0 0 1 8 8v3" fill="none" stroke="#444" stroke-width="0"/></svg><span class="t" style="left:91.0px;top:640.5px;font-size:11px;line-height:15px;color:#222;font-weight:normal;transform:scaleX(0.7383);">フィレット170</span><div class="abs" style="left:59.0px;top:662.0px;width:94.0px;height:20px;background:rgba(240,240,240,0.92)"></div><svg style="left:62.7px;top:664.4px" width="15.6" height="15.6" viewBox="0 0 17 17"><path d="M0.500 5l3.500-4h4a8 8 0 0 1 8 8v3.500l-3.500 3.500h-12z" fill="#d8d8d8" stroke="#444" stroke-width="0.900"/><path d="M6 3l2.500-2.500a8 8 0 0 1 7.500 8l-3 2.500a7.500 7.500 0 0 0-7-8z" fill="#4a9be0"/><path d="M0.500 5h4a8 8 0 0 1 8 8v3" fill="none" stroke="#444" stroke-width="0"/></svg><span class="t" style="left:91.0px;top:664.5px;font-size:11px;line-height:15px;color:#222;font-weight:normal;transform:scaleX(0.7246);">フィレット171</span><div class="abs" style="left:59.0px;top:686.0px;width:98.0px;height:20px;background:rgba(240,240,240,0.92)"></div><svg style="left:61.5px;top:687.5px" width="17" height="17" viewBox="0 0 17 17"><path d="M0 14l3-2.500h9l-3 2.500z" fill="#ccc"/><path d="M0 14h9.500v2h-9.500z" fill="#b5b5b5"/><path d="M9.500 14l3-2.500v2l-3 2.500z" fill="#a0a0a0"/><path d="M0 3.500h9.500v10.500h-9.500z" fill="#6ab0e4"/><path d="M0 3.500l3-3h9.500l-3 3z" fill="#8ccbf8"/><path d="M9.500 3.500l3-3v11l-3 2.500z" fill="#4a94cf"/><path d="M14.500 14v-11" stroke="#222" stroke-width="1"/><path d="M12.800 4l1.700-3.500 1.700 3.500z" fill="#222"/></svg><span class="t" style="left:92.0px;top:688.5px;font-size:11px;line-height:15px;color:#222;font-weight:normal;transform:scaleX(0.8980);">押し出し172</span><div class="abs" style="left:59.0px;top:710.0px;width:98.0px;height:20px;background:rgba(240,240,240,0.92)"></div><svg style="left:61.5px;top:711.5px" width="17" height="17" viewBox="0 0 17 17"><path d="M0 14l3-2.500h9l-3 2.500z" fill="#ccc"/><path d="M0 14h9.500v2h-9.500z" fill="#b5b5b5"/><path d="M9.500 14l3-2.500v2l-3 2.500z" fill="#a0a0a0"/><path d="M0 3.500h9.500v10.500h-9.500z" fill="#6ab0e4"/><path d="M0 3.500l3-3h9.500l-3 3z" fill="#8ccbf8"/><path d="M9.500 3.500l3-3v11l-3 2.500z" fill="#4a94cf"/><path d="M14.500 14v-11" stroke="#222" stroke-width="1"/><path d="M12.800 4l1.700-3.500 1.700 3.500z" fill="#222"/></svg><span class="t" style="left:92.0px;top:712.5px;font-size:11px;line-height:15px;color:#222;font-weight:normal;transform:scaleX(0.8980);">押し出し189</span><div class="abs" style="left:59.0px;top:734.0px;width:98.0px;height:20px;background:rgba(240,240,240,0.92)"></div><svg style="left:61.5px;top:735.5px" width="17" height="17" viewBox="0 0 17 17"><path d="M0 14l3-2.500h9l-3 2.500z" fill="#ccc"/><path d="M0 14h9.500v2h-9.500z" fill="#b5b5b5"/><path d="M9.500 14l3-2.500v2l-3 2.500z" fill="#a0a0a0"/><path d="M0 3.500h9.500v10.500h-9.500z" fill="#6ab0e4"/><path d="M0 3.500l3-3h9.500l-3 3z" fill="#8ccbf8"/><path d="M9.500 3.500l3-3v11l-3 2.500z" fill="#4a94cf"/><path d="M14.500 14v-11" stroke="#222" stroke-width="1"/><path d="M12.800 4l1.700-3.500 1.700 3.500z" fill="#222"/></svg><span class="t" style="left:92.0px;top:736.5px;font-size:11px;line-height:15px;color:#222;font-weight:normal;transform:scaleX(0.8980);">押し出し191</span><div class="abs" style="left:59.0px;top:758.0px;width:98.0px;height:20px;background:rgba(240,240,240,0.92)"></div><svg style="left:61.5px;top:759.5px" width="17" height="17" viewBox="0 0 17 17"><path d="M0 14l3-2.500h9l-3 2.500z" fill="#ccc"/><path d="M0 14h9.500v2h-9.500z" fill="#b5b5b5"/><path d="M9.500 14l3-2.500v2l-3 2.500z" fill="#a0a0a0"/><path d="M0 3.500h9.500v10.500h-9.500z" fill="#6ab0e4"/><path d="M0 3.500l3-3h9.500l-3 3z" fill="#8ccbf8"/><path d="M9.500 3.500l3-3v11l-3 2.500z" fill="#4a94cf"/><path d="M14.500 14v-11" stroke="#222" stroke-width="1"/><path d="M12.800 4l1.700-3.500 1.700 3.500z" fill="#222"/></svg><span class="t" style="left:92.0px;top:760.5px;font-size:11px;line-height:15px;color:#222;font-weight:normal;transform:scaleX(0.8980);">押し出し192</span><div class="abs" style="left:59.0px;top:782.0px;width:98.0px;height:20px;background:rgba(240,240,240,0.92)"></div><svg style="left:61.5px;top:783.5px" width="17" height="17" viewBox="0 0 17 17"><path d="M0 14l3-2.500h9l-3 2.500z" fill="#ccc"/><path d="M0 14h9.500v2h-9.500z" fill="#b5b5b5"/><path d="M9.500 14l3-2.500v2l-3 2.500z" fill="#a0a0a0"/><path d="M0 3.500h9.500v10.500h-9.500z" fill="#6ab0e4"/><path d="M0 3.500l3-3h9.500l-3 3z" fill="#8ccbf8"/><path d="M9.500 3.500l3-3v11l-3 2.500z" fill="#4a94cf"/><path d="M14.500 14v-11" stroke="#222" stroke-width="1"/><path d="M12.800 4l1.700-3.500 1.700 3.500z" fill="#222"/></svg><span class="t" style="left:92.0px;top:784.5px;font-size:11px;line-height:15px;color:#222;font-weight:normal;transform:scaleX(0.8980);">押し出し193</span><div class="abs" style="left:59.0px;top:806.0px;width:98.0px;height:20px;background:rgba(240,240,240,0.92)"></div><svg style="left:61.5px;top:807.5px" width="17" height="17" viewBox="0 0 17 17"><path d="M0 14l3-2.500h9l-3 2.500z" fill="#ccc"/><path d="M0 14h9.500v2h-9.500z" fill="#b5b5b5"/><path d="M9.500 14l3-2.500v2l-3 2.500z" fill="#a0a0a0"/><path d="M0 3.500h9.500v10.500h-9.500z" fill="#6ab0e4"/><path d="M0 3.500l3-3h9.500l-3 3z" fill="#8ccbf8"/><path d="M9.500 3.500l3-3v11l-3 2.500z" fill="#4a94cf"/><path d="M14.500 14v-11" stroke="#222" stroke-width="1"/><path d="M12.800 4l1.700-3.500 1.700 3.500z" fill="#222"/></svg><span class="t" style="left:92.0px;top:808.5px;font-size:11px;line-height:15px;color:#222;font-weight:normal;transform:scaleX(0.8980);">押し出し200</span><div class="abs" style="left:59.0px;top:830.0px;width:98.0px;height:20px;background:rgba(240,240,240,0.92)"></div><svg style="left:61.5px;top:831.5px" width="17" height="17" viewBox="0 0 17 17"><path d="M0 14l3-2.500h9l-3 2.500z" fill="#ccc"/><path d="M0 14h9.500v2h-9.500z" fill="#b5b5b5"/><path d="M9.500 14l3-2.500v2l-3 2.500z" fill="#a0a0a0"/><path d="M0 3.500h9.500v10.500h-9.500z" fill="#6ab0e4"/><path d="M0 3.500l3-3h9.500l-3 3z" fill="#8ccbf8"/><path d="M9.500 3.500l3-3v11l-3 2.500z" fill="#4a94cf"/><path d="M14.500 14v-11" stroke="#222" stroke-width="1"/><path d="M12.800 4l1.700-3.500 1.700 3.500z" fill="#222"/></svg><span class="t" style="left:92.0px;top:832.5px;font-size:11px;line-height:15px;color:#222;font-weight:normal;transform:scaleX(0.8980);">押し出し223</span><div class="abs" style="left:59.0px;top:854.0px;width:98.0px;height:20px;background:rgba(240,240,240,0.92)"></div><svg style="left:61.5px;top:855.5px" width="17" height="17" viewBox="0 0 17 17"><path d="M0 14l3-2.500h9l-3 2.500z" fill="#ccc"/><path d="M0 14h9.500v2h-9.500z" fill="#b5b5b5"/><path d="M9.500 14l3-2.500v2l-3 2.500z" fill="#a0a0a0"/><path d="M0 3.500h9.500v10.500h-9.500z" fill="#6ab0e4"/><path d="M0 3.500l3-3h9.500l-3 3z" fill="#8ccbf8"/><path d="M9.500 3.500l3-3v11l-3 2.500z" fill="#4a94cf"/><path d="M14.500 14v-11" stroke="#222" stroke-width="1"/><path d="M12.800 4l1.700-3.500 1.700 3.500z" fill="#222"/></svg><span class="t" style="left:92.0px;top:856.5px;font-size:11px;line-height:15px;color:#222;font-weight:normal;transform:scaleX(0.8980);">押し出し224</span><div class="abs" style="left:59.0px;top:878.0px;width:98.0px;height:20px;background:rgba(240,240,240,0.92)"></div><svg style="left:61.5px;top:879.5px" width="17" height="17" viewBox="0 0 17 17"><path d="M0 14l3-2.500h9l-3 2.500z" fill="#ccc"/><path d="M0 14h9.500v2h-9.500z" fill="#b5b5b5"/><path d="M9.500 14l3-2.500v2l-3 2.500z" fill="#a0a0a0"/><path d="M0 3.500h9.500v10.500h-9.500z" fill="#6ab0e4"/><path d="M0 3.500l3-3h9.500l-3 3z" fill="#8ccbf8"/><path d="M9.500 3.500l3-3v11l-3 2.500z" fill="#4a94cf"/><path d="M14.500 14v-11" stroke="#222" stroke-width="1"/><path d="M12.800 4l1.700-3.500 1.700 3.500z" fill="#222"/></svg><span class="t" style="left:92.0px;top:880.5px;font-size:11px;line-height:15px;color:#222;font-weight:normal;transform:scaleX(0.8980);">押し出し225</span><div class="abs" style="left:59.0px;top:902.0px;width:98.0px;height:20px;background:rgba(240,240,240,0.92)"></div><svg style="left:61.5px;top:903.5px" width="17" height="17" viewBox="0 0 17 17"><path d="M0 14l3-2.500h9l-3 2.500z" fill="#ccc"/><path d="M0 14h9.500v2h-9.500z" fill="#b5b5b5"/><path d="M9.500 14l3-2.500v2l-3 2.500z" fill="#a0a0a0"/><path d="M0 3.500h9.500v10.500h-9.500z" fill="#6ab0e4"/><path d="M0 3.500l3-3h9.500l-3 3z" fill="#8ccbf8"/><path d="M9.500 3.500l3-3v11l-3 2.500z" fill="#4a94cf"/><path d="M14.500 14v-11" stroke="#222" stroke-width="1"/><path d="M12.800 4l1.700-3.500 1.700 3.500z" fill="#222"/></svg><span class="t" style="left:92.0px;top:904.5px;font-size:11px;line-height:15px;color:#222;font-weight:normal;transform:scaleX(0.8980);">押し出し226</span><div class="abs" style="left:59.0px;top:926.0px;width:98.0px;height:20px;background:rgba(240,240,240,0.92)"></div><svg style="left:61.5px;top:927.5px" width="17" height="17" viewBox="0 0 17 17"><path d="M0 14l3-2.500h9l-3 2.500z" fill="#ccc"/><path d="M0 14h9.500v2h-9.500z" fill="#b5b5b5"/><path d="M9.500 14l3-2.500v2l-3 2.500z" fill="#a0a0a0"/><path d="M0 3.500h9.500v10.500h-9.500z" fill="#6ab0e4"/><path d="M0 3.500l3-3h9.500l-3 3z" fill="#8ccbf8"/><path d="M9.500 3.500l3-3v11l-3 2.500z" fill="#4a94cf"/><path d="M14.500 14v-11" stroke="#222" stroke-width="1"/><path d="M12.800 4l1.700-3.500 1.700 3.500z" fill="#222"/></svg><span class="t" style="left:92.0px;top:928.5px;font-size:11px;line-height:15px;color:#222;font-weight:normal;transform:scaleX(0.8980);">押し出し227</span><div class="abs" style="left:59.0px;top:950.0px;width:98.0px;height:20px;background:rgba(240,240,240,0.92)"></div><svg style="left:62.7px;top:952.4px" width="15.6" height="15.6" viewBox="0 0 17 17"><path d="M0.500 5l3.500-4h4a8 8 0 0 1 8 8v3.500l-3.500 3.500h-12z" fill="#d8d8d8" stroke="#444" stroke-width="0.900"/><path d="M6 3l2.500-2.500a8 8 0 0 1 7.500 8l-3 2.500a7.500 7.500 0 0 0-7-8z" fill="#4a9be0"/><path d="M0.500 5h4a8 8 0 0 1 8 8v3" fill="none" stroke="#444" stroke-width="0"/></svg><span class="t" style="left:91.0px;top:952.5px;font-size:11px;line-height:15px;color:#222;font-weight:normal;transform:scaleX(0.7383);">フィレット228</span><div class="abs" style="left:59.0px;top:974.0px;width:98.0px;height:20px;background:rgba(240,240,240,0.92)"></div><svg style="left:62.7px;top:976.4px" width="15.6" height="15.6" viewBox="0 0 17 17"><path d="M0.500 5l3.500-4h4a8 8 0 0 1 8 8v3.500l-3.500 3.500h-12z" fill="#d8d8d8" stroke="#444" stroke-width="0.900"/><path d="M6 3l2.500-2.500a8 8 0 0 1 7.500 8l-3 2.500a7.500 7.500 0 0 0-7-8z" fill="#4a9be0"/><path d="M0.500 5h4a8 8 0 0 1 8 8v3" fill="none" stroke="#444" stroke-width="0"/></svg><span class="t" style="left:91.0px;top:976.5px;font-size:11px;line-height:15px;color:#222;font-weight:normal;transform:scaleX(0.7383);">フィレット229</span><div class="abs" style="left:5px;top:1018px;width:300px;height:25px;background:#f2f2f2;border:1px solid #c9c9c9;border-top-color:#e4e4e4"></div><span class="t" style="left:29.0px;top:1023.0px;font-size:11px;line-height:15px;color:#333;font-weight:normal;transform:scaleX(0.7273);">コメント</span><svg style="left:283.5px;top:1026.5px" width="9" height="9" viewBox="0 0 9 9"><circle cx="4.500" cy="4.500" r="4.300" fill="#222"/><path d="M2 4.500h5M4.500 2v5" stroke="#fff" stroke-width="1.300"/></svg><svg style="left:299.5px;top:1025.0px" width="4" height="12" viewBox="0 0 4 12"><path d="M0.500 0v12" stroke="#555" stroke-width="1"/><path d="M2.500 2v8" stroke="#999" stroke-width="1"/></svg><div class="abs" style="left:842px;top:1020px;width:237px;height:22px;background:#f0f0f0"></div><svg style="left:842px;top:1020px" width="237" height="20" viewBox="842 1020 237 20"><path d="M853.500 1025v15" stroke="#333" stroke-width="1.200"/><path d="M851 1027l2.500-4 2.500 4z" fill="#fff" stroke="#333" stroke-width="0.800"/><ellipse cx="853.500" cy="1034" rx="7" ry="2.800" fill="none" stroke="#333" stroke-width="1.100"/><path d="M846 1036.500l3.500-2.200 0.300 4z" fill="#333"/><path d="M865.5 1030h7l-3.500 4.200z" fill="#333"/><path d="M976.5 1030h7l-3.500 4.200z" fill="#333"/><path d="M1006.5 1030h7l-3.500 4.200z" fill="#333"/><path d="M1037.5 1030h7l-3.500 4.200z" fill="#333"/><path d="M1068.5 1030h7l-3.500 4.200z" fill="#333"/><path d="M879.500 1029.500h14.500v10h-14.500z" fill="#f8f8f8" stroke="#333" stroke-width="1.100"/><path d="M880 1029l4-4 0 2.500 9-2v3" fill="#ddd" stroke="#333" stroke-width="0.900"/><rect x="882.500" y="1032.500" width="8.500" height="4" fill="#aab4c8" stroke="#333" stroke-width="0.800"/><path d="M907 1040c-1-2-3-4-3.500-5.500s1-1.500 2.200-0.300l1.300 1.300v-7.500c0-1.300 1.800-1.300 1.800 0v-2c0-1.300 1.900-1.300 1.900 0v1c0-1.300 1.900-1.300 1.900 0v1.500c0-1.200 1.800-1.200 1.800 0v6c1-1.500 2-3 3-2.500s0 2.500-1 4-1.500 3-2 4z" fill="#fff" stroke="#333" stroke-width="0.900"/><circle cx="934.8" cy="1030.800" r="4.2" fill="#eef4f8" stroke="#333" stroke-width="1.200"/><path d="M938 1034.200l4.500 4.500" stroke="#333" stroke-width="2.400"/><path d="M941.8 1025.700h5M944.300 1023.200v5M941.800 1029.500h5" stroke="#333" stroke-width="0.900"/><rect x="956.500" y="1024.500" width="15" height="15" fill="none" stroke="#333" stroke-width="0.900" stroke-dasharray="2.500 1.500"/><circle cx="963" cy="1030.500" r="6" fill="#eef4f8" stroke="#333" stroke-width="1.200"/><path d="M967.500 1035l5 5" stroke="#333" stroke-width="2.600"/><rect x="989.500" y="1024.500" width="15" height="12" rx="1" fill="#e8e8e8" stroke="#333" stroke-width="1.200"/><rect x="992" y="1027" width="10" height="7" fill="#9db8e0" stroke="#4a6aa8" stroke-width="0.700"/><path d="M994 1039.500h6M997 1036.500v3" stroke="#333" stroke-width="1"/><rect x="1020.500" y="1024.500" width="15" height="15.500" fill="#c8ccd8"/><path d="M1020.5 1024.500v15.500M1020 1024.5h15.500M1024.2 1024.500v15.500M1020 1028.2h15.500M1027.9 1024.500v15.500M1020 1031.9h15.500M1031.6 1024.500v15.500M1020 1035.6h15.500M1035.3 1024.500v15.500M1020 1039.3h15.500" stroke="#3a3f55" stroke-width="0.900" fill="none"/><rect x="1051.6" y="1025.6" width="6.4" height="5.2" rx="0.8" fill="#9db8e0" stroke="#2a4a90" stroke-width="1"/><rect x="1059.4" y="1025.6" width="6.4" height="5.2" rx="0.8" fill="#9db8e0" stroke="#2a4a90" stroke-width="1"/><rect x="1051.6" y="1032.2" width="6.4" height="5.2" rx="0.8" fill="#9db8e0" stroke="#2a4a90" stroke-width="1"/><rect x="1059.4" y="1032.2" width="6.4" height="5.2" rx="0.8" fill="#9db8e0" stroke="#2a4a90" stroke-width="1"/></svg><div class="abs" style="left:0;top:1040px;width:1920px;height:16px;background:#101010"></div><div class="abs" style="left:1920px;top:1049px;width:9px;height:7px;background:#101010"></div><div class="abs" style="left:48px;top:1040px;width:344px;height:16px;background:#fff;border-top:1px solid #b4b4b4"></div><div class="abs" style="left:932px;top:1040px;width:48px;height:16px;background:#8a4a1c"></div><div class="abs" style="left:1030px;top:1040px;width:48px;height:16px;background:#333"></div><svg style="left:0;top:1040px" width="1929" height="16" viewBox="0 1040 1929 16"><path d="M16 1053l7-1v4h-7zM24 1051.800l8-1.100v5.300h-8z" fill="#fff"/><circle cx="71" cy="1059" r="6.500" fill="none" stroke="#222" stroke-width="1.400"/><circle cx="416" cy="1062" r="8" fill="none" stroke="#fff" stroke-width="2"/><path d="M456 1052.500h10M469.500 1052v3" stroke="#fff" stroke-width="1.200"/><path d="M509 1055v-4.500h13v4.500" fill="none" stroke="#29a8e8" stroke-width="1.500"/><rect x="503" y="1054" width="24" height="4" fill="#fff"/><path d="M551 1056l14-8 13 8z" fill="#1565b8"/><circle cx="613" cy="1062" r="13" fill="#dd4433"/><path d="M603 1056a13 13 0 0 1 8-7l3 7z" fill="#e8b020"/><circle cx="662" cy="1062" r="13" fill="#2fa8d8"/><path d="M654 1053a13 13 0 0 1 18 1l-8 3z" fill="#48c878"/><path d="M700 1051h10l2 2h8v3h-20z" fill="#f0b030"/><circle cx="758" cy="1063" r="13" fill="#1aa0e8"/><path d="M790 1056l13-9 13 9z" fill="#000"/><circle cx="858" cy="1062" r="12" fill="#1a60e0"/><path d="M897 1056l4-5 18 3 2 2z" fill="#e8a850"/><path d="M899 1056l3-3 16 2.500v0.500z" fill="#58b878"/><circle cx="958" cy="1063" r="13" fill="#18204a"/><circle cx="963" cy="1056" r="3" fill="none" stroke="#ccc" stroke-width="1"/><ellipse cx="1005" cy="1060" rx="11" ry="8" fill="#88b8d8"/><path d="M1008 1052l6-4 2 4z" fill="#e8b070"/><rect x="1043" y="1048" width="24" height="10" rx="2" fill="#ff6b00"/><path d="M1052 1051h6v1.800h-4v3.200h-2z" fill="#fff"/><path d="M1497 1056c0-3 3-4 3.500-7 2 2 3 4 3 7z" fill="#f0c020"/><path d="M1566 1054.500h3M1572 1054v2M1577 1053v3M1582 1054.500h4M1590 1054h2M1620 1054h4M1628 1053v3M1636 1054v2" stroke="#ddd" stroke-width="1.200"/><path d="M1688 1054a4 4 0 0 1 8 0" fill="none" stroke="#ddd" stroke-width="1.200"/><path d="M1712 1055h3M1734 1053l2 2M1740 1052l2 3" stroke="#ddd" stroke-width="1.200"/><rect x="1755" y="1053.500" width="16" height="4" fill="none" stroke="#fff" stroke-width="1.200"/><path d="M1784 1056l2-4 2 4z" fill="#e8e0d0"/><rect x="1879.500" y="1053.500" width="15" height="4" fill="none" stroke="#fff" stroke-width="1.600"/><path d="M1915.500 1041v15" stroke="#555" stroke-width="1"/></svg><span class="t" style="left:1817.0px;top:1044.0px;font-size:11px;line-height:15px;color:#fff;font-weight:normal;transform:scaleX(1.0170);">23:48</span><span class="t" style="left:88.6px;top:1052.0px;font-size:14px;line-height:18px;color:#222;font-weight:normal;transform:scaleX(0.8838);">ここに入力して検索</span><div class="abs" style="left:0;top:1px;width:1px;height:1039px;background:#14506e"></div><div class="abs" style="left:1921px;top:0;width:1px;height:1049px;background:#7d7d7d"></div><div class="abs" style="left:1922px;top:0;width:7px;height:17px;background:#fff"></div></body></html>
